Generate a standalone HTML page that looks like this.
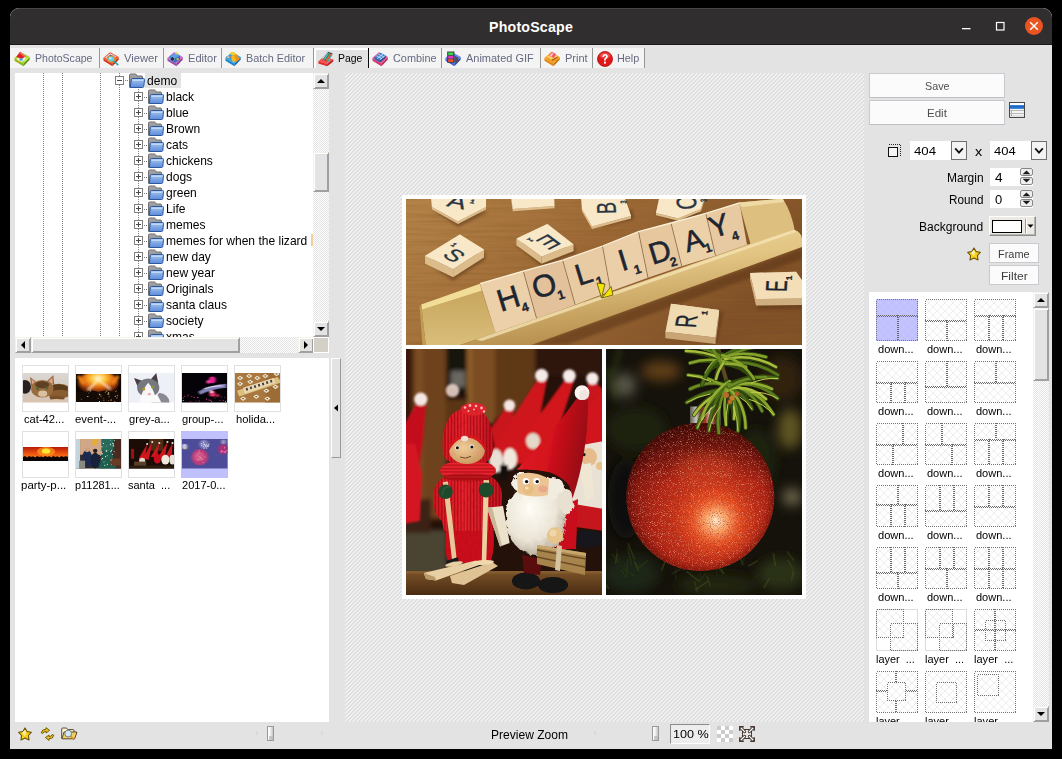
<!DOCTYPE html>
<html><head><meta charset="utf-8"><title>PhotoScape</title><style>

*{box-sizing:border-box;margin:0;padding:0}
html,body{width:1062px;height:759px;overflow:hidden;background:#000}
body{font-family:"Liberation Sans",sans-serif;font-size:12px;color:#000;position:relative}
.abs{position:absolute}
#win{position:absolute;left:10px;top:8px;width:1042px;height:741px;background:#e3e3e3;border-radius:9px 9px 0 0;overflow:hidden}
#title{position:absolute;left:0;top:0;width:1042px;height:36px;background:#302e2f;border-top:1px solid #474546;border-radius:9px 9px 0 0}
#title .tt{position:absolute;left:0;width:1042px;top:8.5px;text-align:center;color:#fff;font-weight:700;font-size:14.2px;letter-spacing:.2px;line-height:18px}
#tsep{position:absolute;left:0;top:36px;width:1042px;height:1px;background:#1b1a1a}
.hatch{background:repeating-linear-gradient(135deg,#f1f1f1 0,#f1f1f1 1.4142px,#dedede 1.4142px,#dedede 2.8284px)}
.sx{display:inline-block;white-space:pre;transform:scaleX(.857);transform-origin:0 50%;font-size:14px;line-height:16px}
.sxc{transform-origin:50% 50%}
.sxr{transform-origin:100% 50%}
.chk{background-image:conic-gradient(#fff 25%,#e3e3e3 0 50%,#fff 0 75%,#e3e3e3 0);background-size:2px 2px}
.b3{background:#e3e3e3;border:1px solid;border-color:#f4f1e6 #a0a0a0 #a0a0a0 #f4f1e6;box-shadow:inset 1px 1px 0 #fff,inset -1px -1px 0 #a0a0a0}


.tab{position:absolute;top:40px;height:20px;font-size:11px;line-height:20px;color:#777c88;white-space:pre}
.tsp{position:absolute;top:40px;width:1px;height:20px;background:#979797}
.trow{position:absolute;height:16px;line-height:16px;white-space:pre}
.btn{position:absolute;background:#fafafa;border:1px solid #cbcbd1;text-align:center;color:#555}
.lbl{position:absolute;white-space:pre}

</style></head><body><div id="win">
<div id="title"><div class="tt">PhotoScape</div><svg class="abs" style="left:930px;top:-1px" width="112" height="36" viewBox="940 8 112 36">
<rect x="962" y="28" width="8.5" height="1.3" fill="#fff"/>
<rect x="996.5" y="22.5" width="7.5" height="7.5" fill="none" stroke="#fff" stroke-width="1.2"/>
<circle cx="1034" cy="26" r="9" fill="#e95420"/>
<path d="M1030.2 22.2 L1037.8 29.8 M1037.8 22.2 L1030.2 29.8" stroke="#fff" stroke-width="1.5" fill="none"/>
</svg></div><div id="tsep"></div>
<div class="abs " style="left:0px;top:40px;width:634px;height:20px;background:#f4f4f4"></div><div class="abs " style="left:304px;top:40px;width:54px;height:20px;background:#e3e3e3;border-left:2px solid #fff;border-top:2px solid #fff;border-top-left-radius:3px"></div><div class="tsp" style="left:89px"></div><div class="tsp" style="left:153px"></div><div class="tsp" style="left:211px"></div><div class="tsp" style="left:303px"></div><div class="tsp" style="left:431px"></div><div class="tsp" style="left:530px"></div><div class="tsp" style="left:582px"></div><div class="tsp" style="left:634px"></div><div class="tsp" style="left:357.6px;width:1.4px;background:#0a0a0a"></div><div class="abs" style="left:4px;top:42.5px;width:16px;height:16px"><svg width="16" height="16" viewBox="0 0 16 16"><path d="M0.5 7.2 L9.4 12.6 L9.4 15.2 L0.5 9.8Z" fill="#86b81e"/><path d="M9.4 12.6 L15.6 6.2 L15.6 8.8 L9.4 15.2Z" fill="#5e9010"/><path d="M0.5 7.2 L7 1.6 L15.6 6.2 L9.4 12.6Z" fill="#a8d838" stroke="#a8d838" stroke-width=".8" stroke-linejoin="round"/><path d="M3 6.6 L7.4 4 L11.4 6.4 L11.4 8.6 L7.6 11 L3 8.4Z" fill="#f4f0e0"/><path d="M2.2 6 L6 .8 L11.8 5.2 L7.6 8Z" fill="#e02424"/><path d="M6 .8 L11.8 5.2 L10.6 6 L5 1.8Z" fill="#f87070"/><rect x="5.6" y="7.4" width="3" height="2.2" fill="#38a0f0"/><rect x="3.4" y="10" width="2.2" height="1.6" fill="#f0a020"/><path d="M9.6 9 L13.2 6.4 L13.8 7.2 L10.4 10.4Z" fill="#d4f060"/></svg></div><span class="abs" style="left:24.80px;top:44.47px;font-size:11.5px;line-height:13.5px;white-space:pre;color:#656a80;font-weight:400;transform:scaleX(0.9175);transform-origin:0 50%;">PhotoScape</span><div class="abs" style="left:93px;top:42.5px;width:16px;height:16px"><svg width="16" height="16" viewBox="0 0 16 16"><path d="M0.5 7.2 L9.4 12.6 L9.4 15.2 L0.5 9.8Z" fill="#d83a20"/><path d="M9.4 12.6 L15.6 6.2 L15.6 8.8 L9.4 15.2Z" fill="#b82c18"/><path d="M0.5 7.2 L7 1.6 L15.6 6.2 L9.4 12.6Z" fill="#f4603c" stroke="#f4603c" stroke-width=".8" stroke-linejoin="round"/><path d="M2.2 6.6 L7.2 2.4 L13 5.4 L8 9.8Z" fill="#f8f8f8"/><path d="M3.4 6.6 L7.3 3.4 L11.8 5.6 L8 8.8Z" fill="#2858b8"/><path d="M4.4 6.8 L7 4.6 L8.2 5.2 L5.6 7.4Z" fill="#f8f8f8" opacity=".7"/><ellipse cx="8.2" cy="8" rx="3.6" ry="3" fill="#58d0f4" stroke="#e8901c" stroke-width="1.1"/><ellipse cx="7.4" cy="7.2" rx="1.4" ry="1" fill="#c8f4ff"/><path d="M11 10.4 L14.8 13.6" stroke="#20a0a8" stroke-width="1.6" stroke-linecap="round"/></svg></div><span class="abs" style="left:113.90px;top:44.47px;font-size:11.5px;line-height:13.5px;white-space:pre;color:#656a80;font-weight:400;transform:scaleX(0.9756);transform-origin:0 50%;">Viewer</span><div class="abs" style="left:157px;top:42.5px;width:16px;height:16px"><svg width="16" height="16" viewBox="0 0 16 16"><path d="M0.5 7.2 L9.4 12.6 L9.4 15.2 L0.5 9.8Z" fill="#a848a8"/><path d="M9.4 12.6 L15.6 6.2 L15.6 8.8 L9.4 15.2Z" fill="#8a3490"/><path d="M0.5 7.2 L7 1.6 L15.6 6.2 L9.4 12.6Z" fill="#cc6ccc" stroke="#cc6ccc" stroke-width=".8" stroke-linejoin="round"/><path d="M3 5 L9 2.2 L13 4.8 L13 8.8 L7.4 11.8 L3 9Z" fill="#2c6cc4"/><path d="M3 5 L9 2.2 L13 4.8 L7.4 7.8Z" fill="#58a0e8"/><circle cx="5.4" cy="8" r="2.2" fill="#1c2c48" stroke="#9ab8e0" stroke-width=".7"/><rect x="8.4" y="1.4" width="2.6" height="2" fill="#d8e040"/><rect x="9.6" y="7" width="2" height="2.2" fill="#e8c020"/></svg></div><span class="abs" style="left:178.10px;top:44.47px;font-size:11.5px;line-height:13.5px;white-space:pre;color:#656a80;font-weight:400;transform:scaleX(0.9618);transform-origin:0 50%;">Editor</span><div class="abs" style="left:215px;top:42.5px;width:16px;height:16px"><svg width="16" height="16" viewBox="0 0 16 16"><path d="M0.5 7.2 L9.4 12.6 L9.4 15.2 L0.5 9.8Z" fill="#1c84c8"/><path d="M9.4 12.6 L15.6 6.2 L15.6 8.8 L9.4 15.2Z" fill="#1468a8"/><path d="M0.5 7.2 L7 1.6 L15.6 6.2 L9.4 12.6Z" fill="#38a8e8" stroke="#38a8e8" stroke-width=".8" stroke-linejoin="round"/><path d="M4.4 2 L8.6 .8 L12 3.2 L7.8 4.8Z" fill="#f8d020"/><path d="M7.8 4.8 L12 3.2 L14.6 8.6 L10.6 11.2Z" fill="#f09018"/><path d="M5.6 5.6 L9.4 4.4 L11 9.4 L8.2 11.8Z" fill="#f8b820"/><path d="M.8 5.6 L5.2 4.2 L7 6.4 L2.8 8Z" fill="#8a8a8a"/><rect x="2.2" y="5.4" width="2.2" height="1.3" fill="#d8d8d8"/></svg></div><span class="abs" style="left:235.80px;top:44.47px;font-size:11.5px;line-height:13.5px;white-space:pre;color:#656a80;font-weight:400;transform:scaleX(0.9448);transform-origin:0 50%;">Batch Editor</span><div class="abs" style="left:307.5px;top:42.5px;width:16px;height:16px"><svg width="16" height="16" viewBox="0 0 16 16"><path d="M0.3 10.3 L6 5.5 L15.3 8.4 L9.2 13Z" fill="#f4504c"/><path d="M0.3 10.3 L9.2 13 L9.2 15.3 L0.3 12.4Z" fill="#e02c2c"/><path d="M9.2 13 L15.3 8.4 L15.3 10.4 L9.2 15.3Z" fill="#b81c1c"/><path d="M4.1 7.6 L9.5 .5 L15.2 2.4 L9.9 11.6Z" fill="#555558"/><path d="M4.1 7.6 L9.5 .5 L10.3 .8 L4.9 8Z" fill="#f4f4f4"/><path d="M9.2 11.3 L14.5 2.2 L15.2 2.4 L9.9 11.6Z" fill="#dcdcdc"/><path d="M5.6 8 L9.9 2 L11.2 2.5 L7.1 8.9Z" fill="#30c0b8"/><path d="M7.6 9.3 L11.8 2.8 L13.2 3.3 L9.2 10.2Z" fill="#f06428"/><path d="M9.3 10.3 L13.5 3.5 L14.2 3.8 L10 10.8Z" fill="#30b0a8"/></svg></div><span class="abs" style="left:328.00px;top:44.47px;font-size:11.5px;line-height:13.5px;white-space:pre;color:#000;font-weight:400;transform:scaleX(0.9084);transform-origin:0 50%;">Page</span><div class="abs" style="left:362px;top:42.5px;width:16px;height:16px"><svg width="16" height="16" viewBox="0 0 16 16"><path d="M0.5 7.2 L9.4 12.6 L9.4 15.2 L0.5 9.8Z" fill="#d8346c"/><path d="M9.4 12.6 L15.6 6.2 L15.6 8.8 L9.4 15.2Z" fill="#b82458"/><path d="M0.5 7.2 L7 1.6 L15.6 6.2 L9.4 12.6Z" fill="#f4588c" stroke="#f4588c" stroke-width=".8" stroke-linejoin="round"/><path d="M2.4 6 L8.4 1.8 L13.8 4.6 L8 9.2Z" fill="#3c88d8"/><path d="M2.4 6 L8 9.2 L8 11.4 L2.4 8.2Z" fill="#2868b0"/><path d="M8 9.2 L13.8 4.6 L13.8 6.8 L8 11.4Z" fill="#1c5498"/><path d="M4.4 4.8 L10 7.6 M6.4 3.2 L12 6 M5.2 7.6 L11 3.2 M8 8.8 L13.2 4.6" stroke="#d8ecff" stroke-width=".7" fill="none"/></svg></div><span class="abs" style="left:382.50px;top:44.47px;font-size:11.5px;line-height:13.5px;white-space:pre;color:#656a80;font-weight:400;transform:scaleX(0.9450);transform-origin:0 50%;">Combine</span><div class="abs" style="left:435px;top:42.5px;width:16px;height:16px"><svg width="16" height="16" viewBox="0 0 16 16"><path d="M0.5 7.2 L9.4 12.6 L9.4 15.2 L0.5 9.8Z" fill="#4060d0"/><path d="M9.4 12.6 L15.6 6.2 L15.6 8.8 L9.4 15.2Z" fill="#2c48b0"/><path d="M0.5 7.2 L7 1.6 L15.6 6.2 L9.4 12.6Z" fill="#6484f0" stroke="#6484f0" stroke-width=".8" stroke-linejoin="round"/><path d="M2.2 .6 L9.4 .6 L9.4 11.8 L2.2 11.8Z" fill="#38383c"/><rect x="3.2" y="1.4" width="5.2" height="2.8" fill="#30d848"/><rect x="3.2" y="4.8" width="5.2" height="2.8" fill="#e830c8"/><rect x="3.2" y="8.2" width="5.2" height="2.8" fill="#f05028"/><path d="M9.4 4.6 L13.4 6.8 L13.4 11 L9.4 11.8Z" fill="#505058"/></svg></div><span class="abs" style="left:455.80px;top:44.47px;font-size:11.5px;line-height:13.5px;white-space:pre;color:#656a80;font-weight:400;transform:scaleX(0.9542);transform-origin:0 50%;">Animated GIF</span><div class="abs" style="left:534px;top:42.5px;width:16px;height:16px"><svg width="16" height="16" viewBox="0 0 16 16"><path d="M0.5 7.2 L9.4 12.6 L9.4 15.2 L0.5 9.8Z" fill="#e08414"/><path d="M9.4 12.6 L15.6 6.2 L15.6 8.8 L9.4 15.2Z" fill="#c06c0c"/><path d="M0.5 7.2 L7 1.6 L15.6 6.2 L9.4 12.6Z" fill="#f8a830" stroke="#f8a830" stroke-width=".8" stroke-linejoin="round"/><path d="M2.6 5.8 L8.4 2.6 L13.6 5.4 L13.6 9 L7.8 12.2 L2.6 9.4Z" fill="#f0a028"/><path d="M2.6 5.8 L8.4 2.6 L13.6 5.4 L7.8 8.6Z" fill="#fcd070"/><path d="M4.8 4.8 L7.8 .8 L12.2 3 L9.8 7Z" fill="#f05868"/><path d="M5.6 4.8 L8 1.8 L9.6 2.6 L7.4 5.8Z" fill="#fcc0c8"/><path d="M7.8 8.6 L13.6 5.4 L13.6 7 L7.8 10.2Z" fill="#b86810"/></svg></div><span class="abs" style="left:555.20px;top:44.47px;font-size:11.5px;line-height:13.5px;white-space:pre;color:#656a80;font-weight:400;transform:scaleX(0.9596);transform-origin:0 50%;">Print</span><div class="abs" style="left:587px;top:42.5px;width:16px;height:16px"><svg width="16" height="16" viewBox="0 0 16 16"><circle cx="8" cy="8" r="7.5" fill="#e01818"/><circle cx="8" cy="8" r="7.5" fill="none" stroke="#b00c0c" stroke-width=".8"/><ellipse cx="8" cy="4.6" rx="5.4" ry="3" fill="#f86868" opacity=".55"/><path d="M5.4 6 Q5.4 3 8 3 Q10.8 3 10.8 5.6 Q10.8 7.2 9.2 8 Q8.6 8.4 8.8 9.6 L7 9.6 Q6.8 7.8 8 7 Q9 6.4 9 5.6 Q9 4.6 8 4.6 Q7 4.6 7 6Z" fill="#fff"/><rect x="6.9" y="10.6" width="2" height="2" fill="#fff"/></svg></div><span class="abs" style="left:607.00px;top:44.47px;font-size:11.5px;line-height:13.5px;white-space:pre;color:#656a80;font-weight:400;transform:scaleX(0.9427);transform-origin:0 50%;">Help</span>
<div class="abs " style="left:5px;top:65px;width:298px;height:264px;background:#fff;overflow:hidden"><svg width="0" height="0" style="position:absolute"><defs><linearGradient id="fgf" x1="0" y1="0" x2="0" y2="1"><stop offset="0" stop-color="#a4c6f2"/><stop offset="1" stop-color="#5b8bd8"/></linearGradient><linearGradient id="fgb" x1="0" y1="0" x2="0" y2="1"><stop offset="0" stop-color="#a8a8a8"/><stop offset="1" stop-color="#787878"/></linearGradient></defs></svg><div class="abs" style="left:28px;top:0px;width:1px;height:264px;background:repeating-linear-gradient(180deg,#808080 0,#808080 1px,transparent 1px,transparent 2px)"></div><div class="abs" style="left:47px;top:0px;width:1px;height:264px;background:repeating-linear-gradient(180deg,#808080 0,#808080 1px,transparent 1px,transparent 2px)"></div><div class="abs" style="left:85px;top:0px;width:1px;height:264px;background:repeating-linear-gradient(180deg,#808080 0,#808080 1px,transparent 1px,transparent 2px)"></div><div class="abs" style="left:104px;top:0px;width:1px;height:4px;background:repeating-linear-gradient(180deg,#808080 0,#808080 1px,transparent 1px,transparent 2px)"></div><div class="abs" style="left:104px;top:12px;width:1px;height:252px;background:repeating-linear-gradient(180deg,#808080 0,#808080 1px,transparent 1px,transparent 2px)"></div><div class="abs" style="left:110px;top:7px;width:4px;height:1px;background:repeating-linear-gradient(90deg,#808080 0,#808080 1px,transparent 1px,transparent 2px)"></div><div class="abs" style="left:100px;top:3px;width:9px;height:9px;border:1px solid #808080;background:#fff"><div class="abs" style="left:1px;top:3px;width:5px;height:1px;background:#4a4a4a"></div></div><div class="abs" style="left:114px;top:-0.5px;width:16px;height:16px;"><svg width="16" height="16" viewBox="0 0 16 16"><path d="M0.5 14.5V2.2Q0.5 1 1.6 1H6.2Q7.2 1 7.6 2L8 3H12.6Q13.5 3 13.5 4V6" fill="url(#fgb)" stroke="#6e6e6e" stroke-width="1"/><path d="M1.2 14.5 L2.4 6.6 Q2.6 5.5 3.6 5.5 H14.6 Q15.6 5.5 15.5 6.6 L14.8 13.4 Q14.6 14.5 13.6 14.5Z" fill="url(#fgf)" stroke="#2b56a4" stroke-width="1"/><path d="M3.4 6.6H14.5L14.3 8H3.2z" fill="#c4dcf8" opacity=".85"/></svg></div><div class="abs" style="left:130px;top:0px;width:36px;height:15px;background:#e3e3e3"></div><div class="abs" style="left:-5px;top:-65px"><span class="abs" style="left:136.80px;top:65.17px;font-size:13.5px;line-height:15.5px;white-space:pre;color:#000;font-weight:400;transform:scaleX(0.8925);transform-origin:0 50%;">demo</span></div><div class="abs" style="left:123px;top:16px;width:1px;height:248px;background:repeating-linear-gradient(180deg,#808080 0,#808080 1px,transparent 1px,transparent 2px)"></div><div class="abs" style="left:129px;top:24px;width:4px;height:1px;background:repeating-linear-gradient(90deg,#808080 0,#808080 1px,transparent 1px,transparent 2px)"></div><div class="abs" style="left:119px;top:19px;width:9px;height:9px;border:1px solid #808080;background:#fff"><div class="abs" style="left:1px;top:3px;width:5px;height:1px;background:#4a4a4a"></div><div class="abs" style="left:3px;top:1px;width:1px;height:5px;background:#4a4a4a"></div></div><div class="abs" style="left:133px;top:15.5px;width:16px;height:16px;"><svg width="16" height="16" viewBox="0 0 16 16"><path d="M0.5 14.5V2.2Q0.5 1 1.6 1H6.2Q7.2 1 7.6 2L8 3H12.6Q13.5 3 13.5 4V6" fill="url(#fgb)" stroke="#6e6e6e" stroke-width="1"/><path d="M1.2 14.5 L2.4 6.6 Q2.6 5.5 3.6 5.5 H14.6 Q15.6 5.5 15.5 6.6 L14.8 13.4 Q14.6 14.5 13.6 14.5Z" fill="url(#fgf)" stroke="#2b56a4" stroke-width="1"/><path d="M3.4 6.6H14.5L14.3 8H3.2z" fill="#c4dcf8" opacity=".85"/></svg></div><div class="abs" style="left:-5px;top:-65px"><span class="abs" style="left:155.50px;top:80.97px;font-size:13.5px;line-height:15.5px;white-space:pre;color:#000;font-weight:400;transform:scaleX(0.8925);transform-origin:0 50%;">black</span></div><div class="abs" style="left:129px;top:40px;width:4px;height:1px;background:repeating-linear-gradient(90deg,#808080 0,#808080 1px,transparent 1px,transparent 2px)"></div><div class="abs" style="left:119px;top:35px;width:9px;height:9px;border:1px solid #808080;background:#fff"><div class="abs" style="left:1px;top:3px;width:5px;height:1px;background:#4a4a4a"></div><div class="abs" style="left:3px;top:1px;width:1px;height:5px;background:#4a4a4a"></div></div><div class="abs" style="left:133px;top:31.5px;width:16px;height:16px;"><svg width="16" height="16" viewBox="0 0 16 16"><path d="M0.5 14.5V2.2Q0.5 1 1.6 1H6.2Q7.2 1 7.6 2L8 3H12.6Q13.5 3 13.5 4V6" fill="url(#fgb)" stroke="#6e6e6e" stroke-width="1"/><path d="M1.2 14.5 L2.4 6.6 Q2.6 5.5 3.6 5.5 H14.6 Q15.6 5.5 15.5 6.6 L14.8 13.4 Q14.6 14.5 13.6 14.5Z" fill="url(#fgf)" stroke="#2b56a4" stroke-width="1"/><path d="M3.4 6.6H14.5L14.3 8H3.2z" fill="#c4dcf8" opacity=".85"/></svg></div><div class="abs" style="left:-5px;top:-65px"><span class="abs" style="left:155.50px;top:96.97px;font-size:13.5px;line-height:15.5px;white-space:pre;color:#000;font-weight:400;transform:scaleX(0.8925);transform-origin:0 50%;">blue</span></div><div class="abs" style="left:129px;top:56px;width:4px;height:1px;background:repeating-linear-gradient(90deg,#808080 0,#808080 1px,transparent 1px,transparent 2px)"></div><div class="abs" style="left:119px;top:51px;width:9px;height:9px;border:1px solid #808080;background:#fff"><div class="abs" style="left:1px;top:3px;width:5px;height:1px;background:#4a4a4a"></div><div class="abs" style="left:3px;top:1px;width:1px;height:5px;background:#4a4a4a"></div></div><div class="abs" style="left:133px;top:47.5px;width:16px;height:16px;"><svg width="16" height="16" viewBox="0 0 16 16"><path d="M0.5 14.5V2.2Q0.5 1 1.6 1H6.2Q7.2 1 7.6 2L8 3H12.6Q13.5 3 13.5 4V6" fill="url(#fgb)" stroke="#6e6e6e" stroke-width="1"/><path d="M1.2 14.5 L2.4 6.6 Q2.6 5.5 3.6 5.5 H14.6 Q15.6 5.5 15.5 6.6 L14.8 13.4 Q14.6 14.5 13.6 14.5Z" fill="url(#fgf)" stroke="#2b56a4" stroke-width="1"/><path d="M3.4 6.6H14.5L14.3 8H3.2z" fill="#c4dcf8" opacity=".85"/></svg></div><div class="abs" style="left:-5px;top:-65px"><span class="abs" style="left:155.50px;top:112.97px;font-size:13.5px;line-height:15.5px;white-space:pre;color:#000;font-weight:400;transform:scaleX(0.8925);transform-origin:0 50%;">Brown</span></div><div class="abs" style="left:129px;top:72px;width:4px;height:1px;background:repeating-linear-gradient(90deg,#808080 0,#808080 1px,transparent 1px,transparent 2px)"></div><div class="abs" style="left:119px;top:67px;width:9px;height:9px;border:1px solid #808080;background:#fff"><div class="abs" style="left:1px;top:3px;width:5px;height:1px;background:#4a4a4a"></div><div class="abs" style="left:3px;top:1px;width:1px;height:5px;background:#4a4a4a"></div></div><div class="abs" style="left:133px;top:63.5px;width:16px;height:16px;"><svg width="16" height="16" viewBox="0 0 16 16"><path d="M0.5 14.5V2.2Q0.5 1 1.6 1H6.2Q7.2 1 7.6 2L8 3H12.6Q13.5 3 13.5 4V6" fill="url(#fgb)" stroke="#6e6e6e" stroke-width="1"/><path d="M1.2 14.5 L2.4 6.6 Q2.6 5.5 3.6 5.5 H14.6 Q15.6 5.5 15.5 6.6 L14.8 13.4 Q14.6 14.5 13.6 14.5Z" fill="url(#fgf)" stroke="#2b56a4" stroke-width="1"/><path d="M3.4 6.6H14.5L14.3 8H3.2z" fill="#c4dcf8" opacity=".85"/></svg></div><div class="abs" style="left:-5px;top:-65px"><span class="abs" style="left:155.50px;top:128.97px;font-size:13.5px;line-height:15.5px;white-space:pre;color:#000;font-weight:400;transform:scaleX(0.8925);transform-origin:0 50%;">cats</span></div><div class="abs" style="left:129px;top:88px;width:4px;height:1px;background:repeating-linear-gradient(90deg,#808080 0,#808080 1px,transparent 1px,transparent 2px)"></div><div class="abs" style="left:119px;top:83px;width:9px;height:9px;border:1px solid #808080;background:#fff"><div class="abs" style="left:1px;top:3px;width:5px;height:1px;background:#4a4a4a"></div><div class="abs" style="left:3px;top:1px;width:1px;height:5px;background:#4a4a4a"></div></div><div class="abs" style="left:133px;top:79.5px;width:16px;height:16px;"><svg width="16" height="16" viewBox="0 0 16 16"><path d="M0.5 14.5V2.2Q0.5 1 1.6 1H6.2Q7.2 1 7.6 2L8 3H12.6Q13.5 3 13.5 4V6" fill="url(#fgb)" stroke="#6e6e6e" stroke-width="1"/><path d="M1.2 14.5 L2.4 6.6 Q2.6 5.5 3.6 5.5 H14.6 Q15.6 5.5 15.5 6.6 L14.8 13.4 Q14.6 14.5 13.6 14.5Z" fill="url(#fgf)" stroke="#2b56a4" stroke-width="1"/><path d="M3.4 6.6H14.5L14.3 8H3.2z" fill="#c4dcf8" opacity=".85"/></svg></div><div class="abs" style="left:-5px;top:-65px"><span class="abs" style="left:155.50px;top:144.97px;font-size:13.5px;line-height:15.5px;white-space:pre;color:#000;font-weight:400;transform:scaleX(0.8925);transform-origin:0 50%;">chickens</span></div><div class="abs" style="left:129px;top:104px;width:4px;height:1px;background:repeating-linear-gradient(90deg,#808080 0,#808080 1px,transparent 1px,transparent 2px)"></div><div class="abs" style="left:119px;top:99px;width:9px;height:9px;border:1px solid #808080;background:#fff"><div class="abs" style="left:1px;top:3px;width:5px;height:1px;background:#4a4a4a"></div><div class="abs" style="left:3px;top:1px;width:1px;height:5px;background:#4a4a4a"></div></div><div class="abs" style="left:133px;top:95.5px;width:16px;height:16px;"><svg width="16" height="16" viewBox="0 0 16 16"><path d="M0.5 14.5V2.2Q0.5 1 1.6 1H6.2Q7.2 1 7.6 2L8 3H12.6Q13.5 3 13.5 4V6" fill="url(#fgb)" stroke="#6e6e6e" stroke-width="1"/><path d="M1.2 14.5 L2.4 6.6 Q2.6 5.5 3.6 5.5 H14.6 Q15.6 5.5 15.5 6.6 L14.8 13.4 Q14.6 14.5 13.6 14.5Z" fill="url(#fgf)" stroke="#2b56a4" stroke-width="1"/><path d="M3.4 6.6H14.5L14.3 8H3.2z" fill="#c4dcf8" opacity=".85"/></svg></div><div class="abs" style="left:-5px;top:-65px"><span class="abs" style="left:155.50px;top:160.97px;font-size:13.5px;line-height:15.5px;white-space:pre;color:#000;font-weight:400;transform:scaleX(0.8925);transform-origin:0 50%;">dogs</span></div><div class="abs" style="left:129px;top:120px;width:4px;height:1px;background:repeating-linear-gradient(90deg,#808080 0,#808080 1px,transparent 1px,transparent 2px)"></div><div class="abs" style="left:119px;top:115px;width:9px;height:9px;border:1px solid #808080;background:#fff"><div class="abs" style="left:1px;top:3px;width:5px;height:1px;background:#4a4a4a"></div><div class="abs" style="left:3px;top:1px;width:1px;height:5px;background:#4a4a4a"></div></div><div class="abs" style="left:133px;top:111.5px;width:16px;height:16px;"><svg width="16" height="16" viewBox="0 0 16 16"><path d="M0.5 14.5V2.2Q0.5 1 1.6 1H6.2Q7.2 1 7.6 2L8 3H12.6Q13.5 3 13.5 4V6" fill="url(#fgb)" stroke="#6e6e6e" stroke-width="1"/><path d="M1.2 14.5 L2.4 6.6 Q2.6 5.5 3.6 5.5 H14.6 Q15.6 5.5 15.5 6.6 L14.8 13.4 Q14.6 14.5 13.6 14.5Z" fill="url(#fgf)" stroke="#2b56a4" stroke-width="1"/><path d="M3.4 6.6H14.5L14.3 8H3.2z" fill="#c4dcf8" opacity=".85"/></svg></div><div class="abs" style="left:-5px;top:-65px"><span class="abs" style="left:155.50px;top:176.97px;font-size:13.5px;line-height:15.5px;white-space:pre;color:#000;font-weight:400;transform:scaleX(0.8925);transform-origin:0 50%;">green</span></div><div class="abs" style="left:129px;top:136px;width:4px;height:1px;background:repeating-linear-gradient(90deg,#808080 0,#808080 1px,transparent 1px,transparent 2px)"></div><div class="abs" style="left:119px;top:131px;width:9px;height:9px;border:1px solid #808080;background:#fff"><div class="abs" style="left:1px;top:3px;width:5px;height:1px;background:#4a4a4a"></div><div class="abs" style="left:3px;top:1px;width:1px;height:5px;background:#4a4a4a"></div></div><div class="abs" style="left:133px;top:127.5px;width:16px;height:16px;"><svg width="16" height="16" viewBox="0 0 16 16"><path d="M0.5 14.5V2.2Q0.5 1 1.6 1H6.2Q7.2 1 7.6 2L8 3H12.6Q13.5 3 13.5 4V6" fill="url(#fgb)" stroke="#6e6e6e" stroke-width="1"/><path d="M1.2 14.5 L2.4 6.6 Q2.6 5.5 3.6 5.5 H14.6 Q15.6 5.5 15.5 6.6 L14.8 13.4 Q14.6 14.5 13.6 14.5Z" fill="url(#fgf)" stroke="#2b56a4" stroke-width="1"/><path d="M3.4 6.6H14.5L14.3 8H3.2z" fill="#c4dcf8" opacity=".85"/></svg></div><div class="abs" style="left:-5px;top:-65px"><span class="abs" style="left:155.50px;top:192.97px;font-size:13.5px;line-height:15.5px;white-space:pre;color:#000;font-weight:400;transform:scaleX(0.8925);transform-origin:0 50%;">Life</span></div><div class="abs" style="left:129px;top:152px;width:4px;height:1px;background:repeating-linear-gradient(90deg,#808080 0,#808080 1px,transparent 1px,transparent 2px)"></div><div class="abs" style="left:119px;top:147px;width:9px;height:9px;border:1px solid #808080;background:#fff"><div class="abs" style="left:1px;top:3px;width:5px;height:1px;background:#4a4a4a"></div><div class="abs" style="left:3px;top:1px;width:1px;height:5px;background:#4a4a4a"></div></div><div class="abs" style="left:133px;top:143.5px;width:16px;height:16px;"><svg width="16" height="16" viewBox="0 0 16 16"><path d="M0.5 14.5V2.2Q0.5 1 1.6 1H6.2Q7.2 1 7.6 2L8 3H12.6Q13.5 3 13.5 4V6" fill="url(#fgb)" stroke="#6e6e6e" stroke-width="1"/><path d="M1.2 14.5 L2.4 6.6 Q2.6 5.5 3.6 5.5 H14.6 Q15.6 5.5 15.5 6.6 L14.8 13.4 Q14.6 14.5 13.6 14.5Z" fill="url(#fgf)" stroke="#2b56a4" stroke-width="1"/><path d="M3.4 6.6H14.5L14.3 8H3.2z" fill="#c4dcf8" opacity=".85"/></svg></div><div class="abs" style="left:-5px;top:-65px"><span class="abs" style="left:155.50px;top:208.97px;font-size:13.5px;line-height:15.5px;white-space:pre;color:#000;font-weight:400;transform:scaleX(0.8925);transform-origin:0 50%;">memes</span></div><div class="abs" style="left:129px;top:168px;width:4px;height:1px;background:repeating-linear-gradient(90deg,#808080 0,#808080 1px,transparent 1px,transparent 2px)"></div><div class="abs" style="left:119px;top:163px;width:9px;height:9px;border:1px solid #808080;background:#fff"><div class="abs" style="left:1px;top:3px;width:5px;height:1px;background:#4a4a4a"></div><div class="abs" style="left:3px;top:1px;width:1px;height:5px;background:#4a4a4a"></div></div><div class="abs" style="left:133px;top:159.5px;width:16px;height:16px;"><svg width="16" height="16" viewBox="0 0 16 16"><path d="M0.5 14.5V2.2Q0.5 1 1.6 1H6.2Q7.2 1 7.6 2L8 3H12.6Q13.5 3 13.5 4V6" fill="url(#fgb)" stroke="#6e6e6e" stroke-width="1"/><path d="M1.2 14.5 L2.4 6.6 Q2.6 5.5 3.6 5.5 H14.6 Q15.6 5.5 15.5 6.6 L14.8 13.4 Q14.6 14.5 13.6 14.5Z" fill="url(#fgf)" stroke="#2b56a4" stroke-width="1"/><path d="M3.4 6.6H14.5L14.3 8H3.2z" fill="#c4dcf8" opacity=".85"/></svg></div><div class="abs" style="left:-5px;top:-65px"><span class="abs" style="left:155.50px;top:224.97px;font-size:13.5px;line-height:15.5px;white-space:pre;color:#000;font-weight:400;transform:scaleX(0.8925);transform-origin:0 50%;">memes for when the lizard</span></div><div class="abs" style="left:129px;top:184px;width:4px;height:1px;background:repeating-linear-gradient(90deg,#808080 0,#808080 1px,transparent 1px,transparent 2px)"></div><div class="abs" style="left:119px;top:179px;width:9px;height:9px;border:1px solid #808080;background:#fff"><div class="abs" style="left:1px;top:3px;width:5px;height:1px;background:#4a4a4a"></div><div class="abs" style="left:3px;top:1px;width:1px;height:5px;background:#4a4a4a"></div></div><div class="abs" style="left:133px;top:175.5px;width:16px;height:16px;"><svg width="16" height="16" viewBox="0 0 16 16"><path d="M0.5 14.5V2.2Q0.5 1 1.6 1H6.2Q7.2 1 7.6 2L8 3H12.6Q13.5 3 13.5 4V6" fill="url(#fgb)" stroke="#6e6e6e" stroke-width="1"/><path d="M1.2 14.5 L2.4 6.6 Q2.6 5.5 3.6 5.5 H14.6 Q15.6 5.5 15.5 6.6 L14.8 13.4 Q14.6 14.5 13.6 14.5Z" fill="url(#fgf)" stroke="#2b56a4" stroke-width="1"/><path d="M3.4 6.6H14.5L14.3 8H3.2z" fill="#c4dcf8" opacity=".85"/></svg></div><div class="abs" style="left:-5px;top:-65px"><span class="abs" style="left:155.50px;top:240.97px;font-size:13.5px;line-height:15.5px;white-space:pre;color:#000;font-weight:400;transform:scaleX(0.8925);transform-origin:0 50%;">new day</span></div><div class="abs" style="left:129px;top:200px;width:4px;height:1px;background:repeating-linear-gradient(90deg,#808080 0,#808080 1px,transparent 1px,transparent 2px)"></div><div class="abs" style="left:119px;top:195px;width:9px;height:9px;border:1px solid #808080;background:#fff"><div class="abs" style="left:1px;top:3px;width:5px;height:1px;background:#4a4a4a"></div><div class="abs" style="left:3px;top:1px;width:1px;height:5px;background:#4a4a4a"></div></div><div class="abs" style="left:133px;top:191.5px;width:16px;height:16px;"><svg width="16" height="16" viewBox="0 0 16 16"><path d="M0.5 14.5V2.2Q0.5 1 1.6 1H6.2Q7.2 1 7.6 2L8 3H12.6Q13.5 3 13.5 4V6" fill="url(#fgb)" stroke="#6e6e6e" stroke-width="1"/><path d="M1.2 14.5 L2.4 6.6 Q2.6 5.5 3.6 5.5 H14.6 Q15.6 5.5 15.5 6.6 L14.8 13.4 Q14.6 14.5 13.6 14.5Z" fill="url(#fgf)" stroke="#2b56a4" stroke-width="1"/><path d="M3.4 6.6H14.5L14.3 8H3.2z" fill="#c4dcf8" opacity=".85"/></svg></div><div class="abs" style="left:-5px;top:-65px"><span class="abs" style="left:155.50px;top:256.97px;font-size:13.5px;line-height:15.5px;white-space:pre;color:#000;font-weight:400;transform:scaleX(0.8925);transform-origin:0 50%;">new year</span></div><div class="abs" style="left:129px;top:216px;width:4px;height:1px;background:repeating-linear-gradient(90deg,#808080 0,#808080 1px,transparent 1px,transparent 2px)"></div><div class="abs" style="left:119px;top:211px;width:9px;height:9px;border:1px solid #808080;background:#fff"><div class="abs" style="left:1px;top:3px;width:5px;height:1px;background:#4a4a4a"></div><div class="abs" style="left:3px;top:1px;width:1px;height:5px;background:#4a4a4a"></div></div><div class="abs" style="left:133px;top:207.5px;width:16px;height:16px;"><svg width="16" height="16" viewBox="0 0 16 16"><path d="M0.5 14.5V2.2Q0.5 1 1.6 1H6.2Q7.2 1 7.6 2L8 3H12.6Q13.5 3 13.5 4V6" fill="url(#fgb)" stroke="#6e6e6e" stroke-width="1"/><path d="M1.2 14.5 L2.4 6.6 Q2.6 5.5 3.6 5.5 H14.6 Q15.6 5.5 15.5 6.6 L14.8 13.4 Q14.6 14.5 13.6 14.5Z" fill="url(#fgf)" stroke="#2b56a4" stroke-width="1"/><path d="M3.4 6.6H14.5L14.3 8H3.2z" fill="#c4dcf8" opacity=".85"/></svg></div><div class="abs" style="left:-5px;top:-65px"><span class="abs" style="left:155.50px;top:272.97px;font-size:13.5px;line-height:15.5px;white-space:pre;color:#000;font-weight:400;transform:scaleX(0.8925);transform-origin:0 50%;">Originals</span></div><div class="abs" style="left:129px;top:232px;width:4px;height:1px;background:repeating-linear-gradient(90deg,#808080 0,#808080 1px,transparent 1px,transparent 2px)"></div><div class="abs" style="left:119px;top:227px;width:9px;height:9px;border:1px solid #808080;background:#fff"><div class="abs" style="left:1px;top:3px;width:5px;height:1px;background:#4a4a4a"></div><div class="abs" style="left:3px;top:1px;width:1px;height:5px;background:#4a4a4a"></div></div><div class="abs" style="left:133px;top:223.5px;width:16px;height:16px;"><svg width="16" height="16" viewBox="0 0 16 16"><path d="M0.5 14.5V2.2Q0.5 1 1.6 1H6.2Q7.2 1 7.6 2L8 3H12.6Q13.5 3 13.5 4V6" fill="url(#fgb)" stroke="#6e6e6e" stroke-width="1"/><path d="M1.2 14.5 L2.4 6.6 Q2.6 5.5 3.6 5.5 H14.6 Q15.6 5.5 15.5 6.6 L14.8 13.4 Q14.6 14.5 13.6 14.5Z" fill="url(#fgf)" stroke="#2b56a4" stroke-width="1"/><path d="M3.4 6.6H14.5L14.3 8H3.2z" fill="#c4dcf8" opacity=".85"/></svg></div><div class="abs" style="left:-5px;top:-65px"><span class="abs" style="left:155.50px;top:288.97px;font-size:13.5px;line-height:15.5px;white-space:pre;color:#000;font-weight:400;transform:scaleX(0.8925);transform-origin:0 50%;">santa claus</span></div><div class="abs" style="left:129px;top:248px;width:4px;height:1px;background:repeating-linear-gradient(90deg,#808080 0,#808080 1px,transparent 1px,transparent 2px)"></div><div class="abs" style="left:119px;top:243px;width:9px;height:9px;border:1px solid #808080;background:#fff"><div class="abs" style="left:1px;top:3px;width:5px;height:1px;background:#4a4a4a"></div><div class="abs" style="left:3px;top:1px;width:1px;height:5px;background:#4a4a4a"></div></div><div class="abs" style="left:133px;top:239.5px;width:16px;height:16px;"><svg width="16" height="16" viewBox="0 0 16 16"><path d="M0.5 14.5V2.2Q0.5 1 1.6 1H6.2Q7.2 1 7.6 2L8 3H12.6Q13.5 3 13.5 4V6" fill="url(#fgb)" stroke="#6e6e6e" stroke-width="1"/><path d="M1.2 14.5 L2.4 6.6 Q2.6 5.5 3.6 5.5 H14.6 Q15.6 5.5 15.5 6.6 L14.8 13.4 Q14.6 14.5 13.6 14.5Z" fill="url(#fgf)" stroke="#2b56a4" stroke-width="1"/><path d="M3.4 6.6H14.5L14.3 8H3.2z" fill="#c4dcf8" opacity=".85"/></svg></div><div class="abs" style="left:-5px;top:-65px"><span class="abs" style="left:155.50px;top:304.97px;font-size:13.5px;line-height:15.5px;white-space:pre;color:#000;font-weight:400;transform:scaleX(0.8925);transform-origin:0 50%;">society</span></div><div class="abs" style="left:129px;top:264px;width:4px;height:1px;background:repeating-linear-gradient(90deg,#808080 0,#808080 1px,transparent 1px,transparent 2px)"></div><div class="abs" style="left:119px;top:259px;width:9px;height:9px;border:1px solid #808080;background:#fff"><div class="abs" style="left:1px;top:3px;width:5px;height:1px;background:#4a4a4a"></div><div class="abs" style="left:3px;top:1px;width:1px;height:5px;background:#4a4a4a"></div></div><div class="abs" style="left:133px;top:255.5px;width:16px;height:16px;"><svg width="16" height="16" viewBox="0 0 16 16"><path d="M0.5 14.5V2.2Q0.5 1 1.6 1H6.2Q7.2 1 7.6 2L8 3H12.6Q13.5 3 13.5 4V6" fill="url(#fgb)" stroke="#6e6e6e" stroke-width="1"/><path d="M1.2 14.5 L2.4 6.6 Q2.6 5.5 3.6 5.5 H14.6 Q15.6 5.5 15.5 6.6 L14.8 13.4 Q14.6 14.5 13.6 14.5Z" fill="url(#fgf)" stroke="#2b56a4" stroke-width="1"/><path d="M3.4 6.6H14.5L14.3 8H3.2z" fill="#c4dcf8" opacity=".85"/></svg></div><div class="abs" style="left:-5px;top:-65px"><span class="abs" style="left:155.50px;top:320.97px;font-size:13.5px;line-height:15.5px;white-space:pre;color:#000;font-weight:400;transform:scaleX(0.8925);transform-origin:0 50%;">xmas</span></div><div class="abs" style="left:296px;top:161px;width:2px;height:12px;background:#f6cf9c"></div></div><div class="abs chk" style="left:303px;top:65px;width:16px;height:264px;"></div><div class="abs b3" style="left:303px;top:65px;width:16px;height:16px;"><svg class="abs" style="left:0;top:0" width="16" height="16"><polygon points="3,9 11,9 7,5" fill="#000"/></svg></div><div class="abs b3" style="left:303px;top:313px;width:16px;height:16px;"><svg class="abs" style="left:0;top:0" width="16" height="16"><polygon points="3,5 11,5 7,9" fill="#000"/></svg></div><div class="abs b3" style="left:303px;top:144px;width:16px;height:40px;"></div><div class="abs chk" style="left:5px;top:329px;width:298px;height:16px;"></div><div class="abs b3" style="left:5px;top:329px;width:16px;height:16px;"><svg class="abs" style="left:0;top:0" width="16" height="16"><polygon points="9,3 9,11 5,7" fill="#000"/></svg></div><div class="abs b3" style="left:288px;top:329px;width:16px;height:16px;"><svg class="abs" style="left:0;top:0" width="16" height="16"><polygon points="5,3 5,11 9,7" fill="#000"/></svg></div><div class="abs b3" style="left:21px;top:329px;width:209px;height:16px;"></div><div class="abs " style="left:303px;top:329px;width:16px;height:16px;background:#d4d0c8;border:1px solid #fff"></div>
<div class="abs " style="left:5px;top:350px;width:314px;height:364px;background:#fff"></div><div class="abs " style="left:321px;top:350px;width:10px;height:100px;background:#e3e3e3;border:1px solid;border-color:#fff #999 #999 #fff"><svg class="abs" style="left:0;top:44px" width="8" height="10"><polygon points="6,1.5 6,8.5 2,5" fill="#000"/></svg></div><div class="abs " style="left:12px;top:357px;width:47px;height:47px;background:#fff;border:1px solid #e0e0e0"><svg class="abs" style="left:-0.5px;top:7px" width="45.5" height="29.5" viewBox="0 0 45 30" preserveAspectRatio="none"><defs><filter id="t1b"><feGaussianBlur stdDeviation=".7"/></filter><linearGradient id="t1g" x1="0" y1="0" x2="0" y2="1"><stop offset="0" stop-color="#dcd8d4"/><stop offset=".6" stop-color="#d2c8be"/><stop offset="1" stop-color="#d8c4b0"/></linearGradient></defs><rect width="45" height="30" fill="url(#t1g)"/><g filter="url(#t1b)"><ellipse cx="2" cy="14" rx="6" ry="7" fill="#2a2420"/><path d="M24 14 Q36 8 46 14 L46 24 Q36 27 26 24Z" fill="#8a5c30"/><path d="M30 12 Q38 10 44 14 L44 18 Q36 16 30 18Z" fill="#5a3a1c"/><polygon points="7,4 13,9 8,14" fill="#a06a44"/><polygon points="30,2 31,12 23,9" fill="#a06a44"/><polygon points="8.5,6 12,9.5 9,12" fill="#d8a890"/><polygon points="29,4.5 29.5,11 25,9" fill="#d8a890"/><ellipse cx="19" cy="16" rx="11" ry="9" fill="#9a6c3c"/><ellipse cx="19" cy="12" rx="7" ry="3.5" fill="#5e4022"/><ellipse cx="19.5" cy="21" rx="4.5" ry="3.2" fill="#d8c0a0"/><circle cx="14.5" cy="16" r="1.5" fill="#4a6a3a"/><circle cx="23.5" cy="15.5" r="1.5" fill="#4a6a3a"/><path d="M26 24 Q34 22 42 25 L40 27 Q32 26 27 27Z" fill="#7a5028"/></g></svg></div><span class="abs" style="left:13.50px;top:405.49px;font-size:11px;line-height:13px;white-space:pre;color:#000;font-weight:400;transform:scaleX(1.0138);transform-origin:0 50%;">cat-42...</span><div class="abs " style="left:65px;top:357px;width:47px;height:47px;background:#fff;border:1px solid #e0e0e0"><svg class="abs" style="left:-0.5px;top:8px" width="45.5" height="28" viewBox="0 0 45 28" preserveAspectRatio="none"><defs><filter id="t2b"><feGaussianBlur stdDeviation="1.2"/></filter><radialGradient id="t2g" cx=".5" cy=".3" r=".6"><stop offset="0" stop-color="#fffbe0"/><stop offset=".32" stop-color="#ffc030"/><stop offset=".65" stop-color="#e06410"/><stop offset="1" stop-color="#5a1c04"/></radialGradient></defs><rect width="45" height="28" fill="#0c0604"/><g filter="url(#t2b)"><ellipse cx="22" cy="9" rx="20" ry="12" fill="url(#t2g)"/><path d="M2 2 L8 10 M42 2 L36 10" stroke="#f08418" stroke-width="3"/><path d="M22 6 L12 16 M22 6 L34 15" stroke="#fff4c0" stroke-width="1.2"/></g><path d="M0 19 Q6 16 10 18 Q16 15 22 18 Q30 15 36 18 Q40 16 45 19 L45 28 L0 28Z" fill="#140a06"/><rect x="11.2" y="22.0" width="1" height="1" fill="#f8e0a0"/><rect x="40.4" y="21.2" width="1" height="1" fill="#e8b060"/><rect x="27.0" y="26.0" width="1" height="1" fill="#8a5a30"/><rect x="12.2" y="18.6" width="1" height="1" fill="#8a5a30"/><rect x="24.3" y="22.0" width="1" height="1" fill="#8a5a30"/><rect x="28.5" y="17.7" width="1" height="1" fill="#c87830"/><rect x="38.3" y="21.8" width="1" height="1" fill="#e8b060"/><rect x="29.9" y="16.7" width="1" height="1" fill="#e8b060"/><rect x="14.0" y="16.3" width="1" height="1" fill="#f8e0a0"/><rect x="21.3" y="23.9" width="1" height="1" fill="#8a5a30"/><rect x="31.7" y="26.1" width="1" height="1" fill="#8a5a30"/><rect x="32.3" y="22.3" width="1" height="1" fill="#c87830"/><rect x="38.8" y="17.1" width="1" height="1" fill="#c87830"/><rect x="22.3" y="18.8" width="1" height="1" fill="#8a5a30"/><rect x="34.5" y="25.4" width="1" height="1" fill="#8a5a30"/><rect x="22.8" y="20.2" width="1" height="1" fill="#f8e0a0"/><rect x="24.0" y="20.5" width="1" height="1" fill="#c87830"/><rect x="39.9" y="23.5" width="1" height="1" fill="#e8b060"/><rect x="37.8" y="26.9" width="1" height="1" fill="#c87830"/><rect x="31.0" y="19.6" width="1" height="1" fill="#e8b060"/><rect x="31.7" y="18.3" width="1" height="1" fill="#f8e0a0"/><rect x="13.3" y="16.7" width="1" height="1" fill="#8a5a30"/><rect x="4.8" y="24.8" width="1" height="1" fill="#8a5a30"/><rect x="39.6" y="16.2" width="1" height="1" fill="#8a5a30"/><rect x="34.1" y="25.6" width="1" height="1" fill="#e8b060"/><rect x="27.0" y="24.4" width="1" height="1" fill="#8a5a30"/><rect x="31.9" y="19.6" width="1" height="1" fill="#f8e0a0"/><rect x="22.7" y="27.0" width="1" height="1" fill="#f8e0a0"/></svg></div><span class="abs" style="left:65.30px;top:405.49px;font-size:11px;line-height:13px;white-space:pre;color:#000;font-weight:400;transform:scaleX(1.0365);transform-origin:0 50%;">event-...</span><div class="abs " style="left:118px;top:357px;width:47px;height:47px;background:#fff;border:1px solid #e0e0e0"><svg class="abs" style="left:-0.5px;top:7px" width="45.5" height="29.5" viewBox="0 0 45 30" preserveAspectRatio="none"><defs><filter id="t3b"><feGaussianBlur stdDeviation=".6"/></filter></defs><rect width="45" height="30" fill="#eef0f8"/><g filter="url(#t3b)"><path d="M30 20 Q40 22 40 30 L22 30Z" fill="#8a8a92"/><polygon points="5,5 13,8 9,15" fill="#4a3c42"/><polygon points="27,0 29,11 21,7" fill="#4a3c42"/><ellipse cx="19" cy="15" rx="11" ry="9.5" fill="#77777f"/><path d="M19 10 Q24 16 26 24 Q20 30 12 24 Q14 16 19 10Z" fill="#f6f6f8"/><path d="M12 22 Q20 26 28 22 L32 30 L10 30Z" fill="#fafafa"/><circle cx="14.5" cy="16.5" r="1.5" fill="#b89020"/><circle cx="23.5" cy="14.5" r="1.5" fill="#8a9a30"/><ellipse cx="20" cy="21.5" rx="1.6" ry="1.1" fill="#f0a0a8"/></g></svg></div><span class="abs" style="left:118.70px;top:405.49px;font-size:11px;line-height:13px;white-space:pre;color:#000;font-weight:400;transform:scaleX(1.0109);transform-origin:0 50%;">grey-a...</span><div class="abs " style="left:171px;top:357px;width:47px;height:47px;background:#fff;border:1px solid #e0e0e0"><svg class="abs" style="left:-0.5px;top:7px" width="45.5" height="29.5" viewBox="0 0 45 30" preserveAspectRatio="none"><defs><filter id="t4b"><feGaussianBlur stdDeviation=".8"/></filter></defs><rect width="45" height="30" fill="#050308"/><g filter="url(#t4b)"><path d="M16 19 Q28 12 44 11 L44 15 Q30 16 18 22Z" fill="#9a9ad8" opacity=".85"/><path d="M22 16 Q30 13 40 13" stroke="#e8e8ff" stroke-width="1.2" fill="none"/><circle cx="30" cy="7" r="3.5" fill="#e0208a"/><circle cx="26" cy="9" r="2" fill="#f040a0"/><circle cx="30" cy="21" r="3" fill="#e83070"/><circle cx="29" cy="19" r="1.6" fill="#ffd0e0"/><circle cx="35" cy="23" r="1.8" fill="#d02040"/></g><rect x="27.4" y="27.2" width="1" height="1" fill="#e84090"/><rect x="37.0" y="27.4" width="1" height="1" fill="#c03070"/><rect x="28.6" y="28.3" width="1" height="1" fill="#e84090"/><rect x="16.4" y="28.1" width="1" height="1" fill="#7a2050"/><rect x="23.9" y="26.0" width="1" height="1" fill="#e84090"/><rect x="32.2" y="24.9" width="1" height="1" fill="#c03070"/><rect x="40.3" y="27.4" width="1" height="1" fill="#c03070"/><rect x="33.5" y="22.5" width="1" height="1" fill="#7a2050"/><rect x="5.6" y="22.0" width="1" height="1" fill="#e84090"/><rect x="9.2" y="23.5" width="1" height="1" fill="#c03070"/><rect x="38.4" y="24.0" width="1" height="1" fill="#c03070"/><rect x="23.7" y="26.7" width="1" height="1" fill="#c03070"/><rect x="8.0" y="28.8" width="1" height="1" fill="#c03070"/><rect x="42.5" y="28.3" width="1" height="1" fill="#f890c0"/><rect x="0.9" y="24.9" width="1" height="1" fill="#c03070"/><rect x="11.6" y="24.3" width="1" height="1" fill="#e84090"/><rect x="26.2" y="27.0" width="1" height="1" fill="#e84090"/><rect x="13.6" y="27.7" width="1" height="1" fill="#7a2050"/><rect x="30.6" y="23.3" width="1" height="1" fill="#7a2050"/><rect x="31.0" y="22.4" width="1" height="1" fill="#e84090"/><rect x="41.8" y="24.5" width="1" height="1" fill="#7a2050"/><rect x="0.8" y="27.5" width="1" height="1" fill="#f890c0"/><rect x="16.6" y="27.9" width="1" height="1" fill="#7a2050"/><rect x="2.1" y="23.3" width="1" height="1" fill="#c03070"/><rect x="5.2" y="23.7" width="1" height="1" fill="#7a2050"/><rect x="15.2" y="24.5" width="1" height="1" fill="#f890c0"/></svg></div><span class="abs" style="left:171.50px;top:405.49px;font-size:11px;line-height:13px;white-space:pre;color:#000;font-weight:400;transform:scaleX(1.0130);transform-origin:0 50%;">group-...</span><div class="abs " style="left:224px;top:357px;width:47px;height:47px;background:#fff;border:1px solid #e0e0e0"><svg class="abs" style="left:-0.5px;top:7px" width="45.5" height="29.5" viewBox="0 0 45 30" preserveAspectRatio="none"><defs><filter id="t5b"><feGaussianBlur stdDeviation=".35"/></filter></defs><rect width="45" height="30" fill="#a87840"/><rect x="30" width="15" height="30" fill="#946430" opacity=".6"/><g filter="url(#t5b)"><polygon points="2,5 5,2.8 8.2,5 5,7.4" fill="#f4e6c4"/><rect x="4.2" y="4.4" width="1.6" height="1.2" fill="#5a5a5a"/><polygon points="11,3 14,0.7999999999999998 17.2,3 14,5.4" fill="#f4e6c4"/><rect x="13.2" y="2.4" width="1.6" height="1.2" fill="#5a5a5a"/><polygon points="19,5 22,2.8 25.2,5 22,7.4" fill="#f4e6c4"/><rect x="21.2" y="4.4" width="1.6" height="1.2" fill="#5a5a5a"/><polygon points="27,3 30,0.7999999999999998 33.2,3 30,5.4" fill="#f4e6c4"/><rect x="29.2" y="2.4" width="1.6" height="1.2" fill="#5a5a5a"/><polygon points="38,1 41,-1.2000000000000002 44.2,1 41,3.4" fill="#f4e6c4"/><rect x="40.2" y="0.4" width="1.6" height="1.2" fill="#5a5a5a"/><polygon points="2,11 5,8.8 8.2,11 5,13.4" fill="#f4e6c4"/><rect x="4.2" y="10.4" width="1.6" height="1.2" fill="#5a5a5a"/><polygon points="12,9 15,6.8 18.2,9 15,11.4" fill="#f4e6c4"/><rect x="14.2" y="8.4" width="1.6" height="1.2" fill="#5a5a5a"/><polygon points="37,14 40,11.8 43.2,14 40,16.4" fill="#f4e6c4"/><rect x="39.2" y="13.4" width="1.6" height="1.2" fill="#5a5a5a"/><polygon points="28,18 31,15.8 34.2,18 31,20.4" fill="#f4e6c4"/><rect x="30.2" y="17.4" width="1.6" height="1.2" fill="#5a5a5a"/><polygon points="18,24 21,21.8 24.2,24 21,26.4" fill="#f4e6c4"/><rect x="20.2" y="23.4" width="1.6" height="1.2" fill="#5a5a5a"/><polygon points="29,26 32,23.8 35.2,26 32,28.4" fill="#f4e6c4"/><rect x="31.2" y="25.4" width="1.6" height="1.2" fill="#5a5a5a"/><polygon points="5,26 8,23.8 11.2,26 8,28.4" fill="#f4e6c4"/><rect x="7.2" y="25.4" width="1.6" height="1.2" fill="#5a5a5a"/><polygon points="2,18 42,4 45,8 45,10 4,24" fill="#dcc080"/><polygon points="8,15 38,5 40,10 10,21" fill="#ecd8b0"/><rect x="11" y="15.5" width="1.8" height="2.6" fill="#3a3a40" transform="rotate(-18 11 17.0)"/><rect x="15" y="14.1" width="1.8" height="2.6" fill="#3a3a40" transform="rotate(-18 15 15.6)"/><rect x="19" y="12.8" width="1.8" height="2.6" fill="#3a3a40" transform="rotate(-18 19 14.3)"/><rect x="23" y="11.4" width="1.8" height="2.6" fill="#3a3a40" transform="rotate(-18 23 12.9)"/><rect x="27" y="10.1" width="1.8" height="2.6" fill="#3a3a40" transform="rotate(-18 27 11.6)"/><rect x="31" y="8.7" width="1.8" height="2.6" fill="#3a3a40" transform="rotate(-18 31 10.2)"/><rect x="35" y="7.3" width="1.8" height="2.6" fill="#3a3a40" transform="rotate(-18 35 8.8)"/></g></svg></div><span class="abs" style="left:225.80px;top:405.49px;font-size:11px;line-height:13px;white-space:pre;color:#000;font-weight:400;transform:scaleX(1.0174);transform-origin:0 50%;">holida...</span><div class="abs " style="left:12px;top:423px;width:47px;height:47px;background:#fff;border:1px solid #e0e0e0"><svg class="abs" style="left:-0.5px;top:15px" width="45.5" height="14" viewBox="0 0 45 14" preserveAspectRatio="none"><defs><linearGradient id="t6g" x1="0" y1="0" x2="0" y2="1"><stop offset="0" stop-color="#b81808"/><stop offset=".5" stop-color="#f05a10"/><stop offset="1" stop-color="#f89020"/></linearGradient><filter id="t6b"><feGaussianBlur stdDeviation=".6"/></filter></defs><rect width="45" height="14" fill="url(#t6g)"/><g filter="url(#t6b)"><ellipse cx="22.8" cy="4.5" rx="9" ry="4.5" fill="#ff9a18" opacity=".7"/><ellipse cx="22.8" cy="4" rx="4.2" ry="2.6" fill="#ffe830"/></g><path d="M0 10 L2 9 L4 10.5 L6 9 L8 10 L10 9.2 L12 10.4 L14 9 L16 10 L18 9.4 L20 10.2 L22 9 L24 10 L26 9.3 L28 10.4 L30 9 L32 10 L34 9.2 L36 10.4 L38 9 L40 10 L42 9.2 L45 10 L45 14 L0 14Z" fill="#0a0404"/></svg></div><span class="abs" style="left:11.20px;top:471.49px;font-size:11px;line-height:13px;white-space:pre;color:#000;font-weight:400;transform:scaleX(1.0436);transform-origin:0 50%;">party-p...</span><div class="abs " style="left:65px;top:423px;width:47px;height:47px;background:#fff;border:1px solid #e0e0e0"><svg class="abs" style="left:-0.5px;top:7px" width="45.5" height="29.5" viewBox="0 0 45 30" preserveAspectRatio="none"><defs><filter id="t7b"><feGaussianBlur stdDeviation=".7"/></filter></defs><rect width="45" height="30" fill="#3a2a22"/><g filter="url(#t7b)"><rect x="0" y="0" width="4" height="30" fill="#c4d4dc"/><rect x="4" y="0" width="22" height="16" fill="#d0a888"/><polygon points="17,0 21,0 20,7 16,5" fill="#e8b020"/><rect x="38" y="0" width="7" height="30" fill="#4a2c20"/><polygon points="31,-2 40,30 22,30" fill="#1f5e50"/><rect x="25" y="0" width="12" height="12" fill="#2a6a5a"/><ellipse cx="11" cy="20" rx="5" ry="9" fill="#1c2c50"/><ellipse cx="19" cy="22" rx="4.5" ry="8" fill="#16203a"/><circle cx="11" cy="11" r="2.4" fill="#c8a080"/><circle cx="19" cy="12" r="2.2" fill="#2a1c18"/><rect x="3" y="22" width="6" height="8" fill="#8a8a80"/><rect x="34" y="20" width="10" height="7" fill="#6a3a28"/></g><rect x="29.9" y="11.1" width="1" height="1" fill="#a0d8c8"/><rect x="25.8" y="19.3" width="1" height="1" fill="#ffffff"/><rect x="30.5" y="25.3" width="1" height="1" fill="#e8f4f0"/><rect x="28.0" y="26.3" width="1" height="1" fill="#e8f4f0"/><rect x="33.9" y="5.6" width="1" height="1" fill="#5aa890"/><rect x="37.3" y="12.4" width="1" height="1" fill="#a0d8c8"/><rect x="26.6" y="4.0" width="1" height="1" fill="#e8f4f0"/><rect x="34.6" y="11.4" width="1" height="1" fill="#e8f4f0"/><rect x="36.8" y="6.5" width="1" height="1" fill="#a0d8c8"/><rect x="33.9" y="12.4" width="1" height="1" fill="#e8f4f0"/><rect x="34.6" y="25.6" width="1" height="1" fill="#5aa890"/><rect x="27.2" y="22.9" width="1" height="1" fill="#a0d8c8"/><rect x="33.6" y="1.1" width="1" height="1" fill="#5aa890"/><rect x="23.8" y="11.2" width="1" height="1" fill="#5aa890"/><rect x="25.1" y="7.4" width="1" height="1" fill="#e8f4f0"/><rect x="37.5" y="1.1" width="1" height="1" fill="#a0d8c8"/><rect x="36.4" y="6.5" width="1" height="1" fill="#e8f4f0"/><rect x="36.4" y="4.6" width="1" height="1" fill="#e8f4f0"/><rect x="30.5" y="16.5" width="1" height="1" fill="#a0d8c8"/><rect x="29.3" y="11.7" width="1" height="1" fill="#e8f4f0"/><rect x="33.5" y="4.9" width="1" height="1" fill="#e8f4f0"/><rect x="23.8" y="16.0" width="1" height="1" fill="#a0d8c8"/><rect x="34.2" y="20.9" width="1" height="1" fill="#e8f4f0"/><rect x="24.8" y="20.0" width="1" height="1" fill="#a0d8c8"/><rect x="25.4" y="14.6" width="1" height="1" fill="#ffffff"/><rect x="35.7" y="15.1" width="1" height="1" fill="#e8f4f0"/><rect x="36.0" y="4.0" width="1" height="1" fill="#ffffff"/><rect x="29.8" y="11.9" width="1" height="1" fill="#e8f4f0"/><rect x="28.7" y="17.4" width="1" height="1" fill="#e8f4f0"/><rect x="29.5" y="6.8" width="1" height="1" fill="#5aa890"/></svg></div><span class="abs" style="left:65.30px;top:471.49px;font-size:11px;line-height:13px;white-space:pre;color:#000;font-weight:400;transform:scaleX(0.9942);transform-origin:0 50%;">p11281...</span><div class="abs " style="left:118px;top:423px;width:47px;height:47px;background:#fff;border:1px solid #e0e0e0"><svg class="abs" style="left:-0.5px;top:7px" width="45.5" height="29.5" viewBox="0 0 45 30" preserveAspectRatio="none"><defs><filter id="t8b"><feGaussianBlur stdDeviation=".6"/></filter></defs><rect width="45" height="30" fill="#1c0c06"/><rect x="20" width="14" height="12" fill="#5a3418" opacity=".8"/><g filter="url(#t8b)"><polygon points="18,5 9.5,20 15.5,21" fill="#d0141c"/><circle cx="18" cy="5" r="1" fill="#f4e8e4"/><polygon points="23,3 13.5,20 19.5,21" fill="#d0141c"/><circle cx="23" cy="3" r="1" fill="#f4e8e4"/><polygon points="30,4 21.5,18 27.5,19" fill="#d0141c"/><circle cx="30" cy="4" r="1" fill="#f4e8e4"/><polygon points="38,3 28.0,20 35.0,21" fill="#d0141c"/><circle cx="38" cy="3" r="1" fill="#f4e8e4"/><polygon points="43,4 35.0,20 42.0,21" fill="#d0141c"/><circle cx="43" cy="4" r="1" fill="#f4e8e4"/><rect x="2" y="10" width="3" height="10" fill="#a00c14"/><ellipse cx="28" cy="20" rx="3.5" ry="5" fill="#c8101a"/><ellipse cx="36" cy="21" rx="4" ry="5" fill="#f0e8dc"/><ellipse cx="43" cy="21" rx="3" ry="5" fill="#e8e0d4"/><ellipse cx="13" cy="22" rx="3" ry="3" fill="#e0d8cc"/><rect x="5" y="23" width="12" height="6" fill="#5a4028"/><rect x="0" y="27" width="45" height="3" fill="#2a1a10"/></g></svg></div><span class="abs" style="left:118.00px;top:471.49px;font-size:11px;line-height:13px;white-space:pre;color:#000;font-weight:400;transform:scaleX(0.9999);transform-origin:0 50%;">santa  ...</span><div class="abs " style="left:171px;top:423px;width:47px;height:47px;background:#c0c0fd;border:1px solid #c0c0fd"><svg class="abs" style="left:0px;top:7px" width="45.5" height="29.5" viewBox="0 0 45 30" preserveAspectRatio="none"><defs><filter id="t9b"><feGaussianBlur stdDeviation=".8"/></filter></defs><rect width="45" height="30" fill="#4c4c98"/><g filter="url(#t9b)"><circle cx="17.7" cy="18.5" r="8.3" fill="#b83c7c"/><circle cx="17" cy="18" r="5" fill="#d05888"/><circle cx="40.7" cy="10.5" r="5.3" fill="#a83078"/><circle cx="21.8" cy="5.3" r="4.6" fill="#8c8cc4" opacity=".8"/><circle cx="2.5" cy="7.5" r="2.6" fill="#c8c8e8"/><circle cx="3" cy="9.5" r="1.2" fill="#e8d890"/><circle cx="41" cy="3" r="2.4" fill="#b0a8c8" opacity=".8"/></g><rect x="18.9" y="5.8" width="1" height="1" fill="#e4e4f4"/><rect x="21.5" y="4.7" width="1" height="1" fill="#e4e4f4"/><rect x="23.5" y="5.4" width="1" height="1" fill="#e4e4f4"/><rect x="21.3" y="8.9" width="1" height="1" fill="#e4e4f4"/><rect x="20.8" y="2.8" width="1" height="1" fill="#e4e4f4"/><rect x="19.0" y="4.2" width="1" height="1" fill="#e4e4f4"/><rect x="23.0" y="6.9" width="1" height="1" fill="#e4e4f4"/><rect x="23.9" y="8.8" width="1" height="1" fill="#e4e4f4"/><rect x="25.2" y="6.6" width="1" height="1" fill="#e4e4f4"/><rect x="24.6" y="6.7" width="1" height="1" fill="#e4e4f4"/><rect x="20.9" y="6.9" width="1" height="1" fill="#e4e4f4"/><rect x="21.8" y="5.2" width="1" height="1" fill="#e4e4f4"/><rect x="25.6" y="6.8" width="1" height="1" fill="#e4e4f4"/><rect x="21.4" y="5.3" width="1" height="1" fill="#e4e4f4"/><rect x="26.0" y="4.9" width="1" height="1" fill="#e4e4f4"/><rect x="23.2" y="6.5" width="1" height="1" fill="#e4e4f4"/><rect x="19.1" y="20.1" width="1" height="1" fill="#e890b0"/><rect x="16.9" y="17.7" width="1" height="1" fill="#e890b0"/><rect x="17.6" y="18.2" width="1" height="1" fill="#e890b0"/><rect x="20.4" y="23.5" width="1" height="1" fill="#e890b0"/><rect x="15.3" y="20.2" width="1" height="1" fill="#e890b0"/><rect x="14.9" y="16.6" width="1" height="1" fill="#e890b0"/><rect x="17.5" y="18.6" width="1" height="1" fill="#e890b0"/><rect x="16.7" y="11.8" width="1" height="1" fill="#e890b0"/><rect x="22.3" y="17.8" width="1" height="1" fill="#e890b0"/><rect x="16.1" y="20.5" width="1" height="1" fill="#e890b0"/><rect x="16.0" y="14.1" width="1" height="1" fill="#e890b0"/><rect x="18.9" y="19.6" width="1" height="1" fill="#e890b0"/><rect x="39.2" y="12.2" width="1" height="1" fill="#e8a0d0"/><rect x="41.5" y="8.4" width="1" height="1" fill="#e8a0d0"/><rect x="44.3" y="11.2" width="1" height="1" fill="#e8a0d0"/><rect x="38.6" y="11.5" width="1" height="1" fill="#e8a0d0"/><rect x="41.0" y="12.4" width="1" height="1" fill="#e8a0d0"/><rect x="38.1" y="12.7" width="1" height="1" fill="#e8a0d0"/><rect x="42.7" y="12.0" width="1" height="1" fill="#e8a0d0"/><rect x="42.1" y="13.3" width="1" height="1" fill="#e8a0d0"/></svg></div><span class="abs" style="left:171.80px;top:471.49px;font-size:11px;line-height:13px;white-space:pre;color:#000;font-weight:400;transform:scaleX(1.0018);transform-origin:0 50%;">2017-0...</span>
<div class="abs hatch" style="left:335px;top:65px;width:519px;height:649px;"></div><div class="abs " style="left:392px;top:187px;width:404px;height:404px;background:#fff"></div><div class="abs " style="left:396px;top:191px;width:396px;height:146px;background:#a5763f;overflow:hidden"><svg class="abs" style="left:0;top:0" width="396" height="146" viewBox="0 0 396 146" font-family="Liberation Sans, sans-serif"><defs>
<linearGradient id="tw" x1="0" y1="0" x2="1" y2=".35"><stop offset="0" stop-color="#b4834a"/><stop offset=".45" stop-color="#a06c38"/><stop offset="1" stop-color="#7f4f27"/></linearGradient>
<linearGradient id="lip" x1="0" y1="0" x2=".33" y2="1"><stop offset="0" stop-color="#f0dba4"/><stop offset=".45" stop-color="#e2c482"/><stop offset="1" stop-color="#b48c4a"/></linearGradient>
<linearGradient id="rk" x1="0" y1="0" x2="0" y2="1"><stop offset="0" stop-color="#c8a75e"/><stop offset="1" stop-color="#d9bd7a"/></linearGradient>
<filter id="grain" x="0" y="0" width="100%" height="100%"><feTurbulence type="fractalNoise" baseFrequency="0.012 0.35" numOctaves="2" seed="3"/><feColorMatrix values="0 0 0 0 0.25  0 0 0 0 0.12  0 0 0 0 0.02  0 0 0 -1.6 0.95"/></filter>
<filter id="b1"><feGaussianBlur stdDeviation="1.6"/></filter>
<filter id="b05"><feGaussianBlur stdDeviation=".5"/></filter>
</defs><rect width="396" height="146" fill="url(#tw)"/><rect width="396" height="146" filter="url(#grain)" opacity=".55"/><g filter="url(#b1)" opacity=".55"><polygon points="19.0,62.0 47.0,82.0 80.0,60.0 78.0,52.0" fill="#5a3614" /><polygon points="110.0,46.0 136.0,68.0 170.0,54.0 168.0,46.0" fill="#5a3614" /><polygon points="26.0,10.0 52.0,28.0 82.0,13.0" fill="#5a3614" /><polygon points="250.0,14.0 272.0,25.0 298.0,13.0" fill="#5a3614" /><polygon points="196.0,28.0 228.0,20.0 226.0,10.0" fill="#5a3614" /><polygon points="258.0,134.0 310.0,146.0 318.0,112.0" fill="#5a3614" /><polygon points="350.0,102.0 352.0,110.0 396.0,110.0 396.0,100.0" fill="#5a3614" /><polygon points="125.0,146.0 396.0,50.0 396.0,60.0 160.0,146.0" fill="#5a3614" /></g><polygon points="25.0,-2.0 80.0,-1.0 80.0,1.6 25.0,0.6" fill="#efd8aa" /><polygon points="80.0,-1.0 80.0,8.0 80.0,10.6 80.0,1.6" fill="#dcbc8a" /><polygon points="80.0,8.0 52.0,22.5 52.0,25.1 80.0,10.6" fill="#dcbc8a" /><polygon points="52.0,22.5 26.0,8.0 26.0,10.6 52.0,25.1" fill="#dcbc8a" /><polygon points="26.0,8.0 25.0,-2.0 25.0,0.6 26.0,10.6" fill="#dcbc8a" /><polygon points="25.0,-2.0 80.0,-1.0 80.0,8.0 52.0,22.5 26.0,8.0" fill="#f8e8c8" /><polygon points="105.0,-3.0 148.0,-3.0 148.0,-0.8 105.0,-0.8" fill="#dcbc8a" /><polygon points="148.0,-3.0 148.5,7.0 148.5,9.2 148.0,-0.8" fill="#efd8aa" /><polygon points="148.5,7.0 106.7,10.0 106.7,12.2 148.5,9.2" fill="#dcbc8a" /><polygon points="106.7,10.0 105.0,-3.0 105.0,-0.8 106.7,12.2" fill="#dcbc8a" /><polygon points="105.0,-3.0 148.0,-3.0 148.5,7.0 106.7,10.0" fill="#f8e8c8" /><polygon points="175.0,-2.0 218.0,-3.0 218.0,-0.4 175.0,0.6" fill="#dcbc8a" /><polygon points="218.0,-3.0 225.0,17.0 225.0,19.6 218.0,-0.4" fill="#efd8aa" /><polygon points="225.0,17.0 186.0,27.5 186.0,30.1 225.0,19.6" fill="#dcbc8a" /><polygon points="186.0,27.5 176.0,10.0 176.0,12.6 186.0,30.1" fill="#dcbc8a" /><polygon points="176.0,10.0 175.0,-2.0 175.0,0.6 176.0,12.6" fill="#dcbc8a" /><polygon points="175.0,-2.0 218.0,-3.0 225.0,17.0 186.0,27.5 176.0,10.0" fill="#f8e8c8" /><polygon points="253.7,-3.0 299.0,-3.0 299.0,-0.8 253.7,-0.8" fill="#dcbc8a" /><polygon points="299.0,-3.0 295.0,10.0 295.0,12.2 299.0,-0.8" fill="#dcbc8a" /><polygon points="295.0,10.0 272.0,19.5 272.0,21.7 295.0,12.2" fill="#dcbc8a" /><polygon points="272.0,19.5 250.0,14.0 250.0,16.2 272.0,21.7" fill="#dcbc8a" /><polygon points="250.0,14.0 253.7,-3.0 253.7,-0.8 250.0,16.2" fill="#dcbc8a" /><polygon points="253.7,-3.0 299.0,-3.0 295.0,10.0 272.0,19.5 250.0,14.0" fill="#f8e8c8" /><polygon points="19.2,56.7 53.8,35.6 53.8,43.6 19.2,64.7" fill="#dcbc8a" /><polygon points="53.8,35.6 77.9,50.4 77.9,58.4 53.8,43.6" fill="#efd8aa" /><polygon points="77.9,50.4 47.1,70.2 47.1,78.2 77.9,58.4" fill="#dcbc8a" /><polygon points="47.1,70.2 19.2,56.7 19.2,64.7 47.1,78.2" fill="#dcbc8a" /><polygon points="19.2,56.7 53.8,35.6 77.9,50.4 47.1,70.2" fill="#f8e8c8" /><polygon points="110.6,39.4 141.3,25.0 141.3,32.0 110.6,46.4" fill="#dcbc8a" /><polygon points="141.3,25.0 167.3,45.2 167.3,52.2 141.3,32.0" fill="#efd8aa" /><polygon points="167.3,45.2 135.6,57.7 135.6,64.7 167.3,52.2" fill="#dcbc8a" /><polygon points="135.6,57.7 110.6,39.4 110.6,46.4 135.6,64.7" fill="#dcbc8a" /><polygon points="110.6,39.4 141.3,25.0 167.3,45.2 135.6,57.7" fill="#f8e8c8" /><polygon points="265.0,104.8 313.0,111.0 313.0,117.5 265.0,111.3" fill="#efd8aa" /><polygon points="313.0,111.0 309.5,138.5 309.5,145.0 313.0,117.5" fill="#c9a575" /><polygon points="309.5,138.5 259.5,132.7 259.5,139.2 309.5,145.0" fill="#c9a575" /><polygon points="259.5,132.7 265.0,104.8 265.0,111.3 259.5,139.2" fill="#c9a575" /><polygon points="265.0,104.8 313.0,111.0 309.5,138.5 259.5,132.7" fill="#f0dab2" /><polygon points="344.0,74.0 390.0,72.7 390.0,79.2 344.0,80.5" fill="#cfae80" /><polygon points="390.0,72.7 398.0,84.6 398.0,91.1 390.0,79.2" fill="#efd8aa" /><polygon points="398.0,84.6 398.0,99.5 398.0,106.0 398.0,91.1" fill="#cfae80" /><polygon points="398.0,99.5 350.0,100.0 350.0,106.5 398.0,106.0" fill="#cfae80" /><polygon points="350.0,100.0 344.0,74.0 344.0,80.5 350.0,106.5" fill="#cfae80" /><polygon points="344.0,74.0 390.0,72.7 398.0,84.6 398.0,99.5 350.0,100.0" fill="#f3deb8" /><text stroke="#2a3542" stroke-width=".35" transform="translate(51.5,2.0) scale(1,0.7) rotate(16)" font-size="28" text-anchor="middle" dy=".36em" fill="#2a3542" font-weight="400">A</text><text stroke="#2a3542" stroke-width=".35" transform="translate(66.5,2.5) scale(1,0.62) rotate(16)" font-size="9" text-anchor="middle" dy=".36em" fill="#2a3542" font-weight="700">1</text><text stroke="#2a3542" stroke-width=".35" transform="translate(48.5,56.2) scale(1,0.62) rotate(45)" font-size="27" text-anchor="middle" dy=".36em" fill="#2a3542" font-weight="400">S</text><text stroke="#2a3542" stroke-width=".35" transform="translate(48.0,45.6) scale(1,0.62) rotate(45)" font-size="9" text-anchor="middle" dy=".36em" fill="#2a3542" font-weight="700">1</text><text stroke="#2a3542" stroke-width=".35" transform="translate(143.0,43.0) scale(1,0.62) rotate(140)" font-size="29" text-anchor="middle" dy=".36em" fill="#2a3542" font-weight="400">E</text><text stroke="#2a3542" stroke-width=".35" transform="translate(124.5,41.0) scale(1,0.62) rotate(140)" font-size="9" text-anchor="middle" dy=".36em" fill="#2a3542" font-weight="700">1</text><text stroke="#2a3542" stroke-width=".35" transform="translate(200.0,9.0) scale(1,0.66) rotate(-92)" font-size="27" text-anchor="middle" dy=".36em" fill="#2a3542" font-weight="400">B</text><text stroke="#2a3542" stroke-width=".35" transform="translate(217.5,3.0) scale(1,0.62) rotate(-92)" font-size="9" text-anchor="middle" dy=".36em" fill="#2a3542" font-weight="700">3</text><text stroke="#2a3542" stroke-width=".35" transform="translate(280.0,4.0) scale(1,0.66) rotate(-95)" font-size="28" text-anchor="middle" dy=".36em" fill="#2a3542" font-weight="400">C</text><text stroke="#2a3542" stroke-width=".35" transform="translate(297.5,1.5) scale(1,0.62) rotate(-95)" font-size="9" text-anchor="middle" dy=".36em" fill="#2a3542" font-weight="700">3</text><text stroke="#1f2630" stroke-width=".35" transform="translate(280.0,122.0) scale(1,0.6) rotate(-84)" font-size="30" text-anchor="middle" dy=".36em" fill="#1f2630" font-weight="400">R</text><text stroke="#1f2630" stroke-width=".35" transform="translate(370.0,87.0) scale(1,0.58) rotate(-88)" font-size="30" text-anchor="middle" dy=".36em" fill="#1f2630" font-weight="400">E</text><text stroke="#1f2630" stroke-width=".35" transform="translate(383.0,79.0) rotate(-88) skewX(0)" font-size="8" text-anchor="middle" dy=".36em" fill="#1f2630" font-weight="700">1</text><text stroke="#1f2630" stroke-width=".35" transform="translate(298.5,114.0) rotate(-82) skewX(0)" font-size="8" text-anchor="middle" dy=".36em" fill="#1f2630" font-weight="700">1</text><polygon points="15.8,110.8 75.8,91.7 89.4,133.7 54.0,146.0 19.8,146.0" fill="url(#rk)" /><polygon points="15.2,105.5 74.0,84.8 75.8,91.7 15.8,110.8" fill="#f1dc98" /><polygon points="15.2,105.5 15.8,110.8 19.8,146.0 16.5,146.0 13.6,108.0" fill="#c19d52" /><path d="M333 3.5 L372 0 L377 0 Q386 14 389 33 L345 47 Z" fill="#ddc080"/><path d="M333 3.5 L372 0 L377 0 L378 3 L336 8 Z" fill="#efdaa6"/><polygon points="74.0,84.6 117.3,72.1 130.8,120.2 89.4,133.7" fill="#ecd0a9" /><polygon points="117.3,72.1 156.7,61.2 169.2,105.8 130.8,120.2" fill="#e2c19b" /><polygon points="156.7,61.2 196.5,47.0 204.7,92.3 169.2,105.8" fill="#e9cba3" /><polygon points="196.5,47.0 232.5,32.7 242.0,78.8 204.7,92.3" fill="#ebcfa8" /><polygon points="232.5,32.7 265.0,24.0 275.8,67.3 242.0,78.8" fill="#e6c79e" /><polygon points="265.0,24.0 299.8,14.4 309.5,56.7 275.8,67.3" fill="#ecd0a8" /><polygon points="299.8,14.4 333.5,3.8 341.0,45.8 309.5,56.7" fill="#e8caa2" /><line x1="117.3" y1="72.1" x2="130.8" y2="120.2" stroke="#7a5a38" stroke-width=".8" opacity=".8"/><line x1="156.7" y1="61.2" x2="169.2" y2="105.8" stroke="#7a5a38" stroke-width=".8" opacity=".8"/><line x1="196.5" y1="47" x2="204.7" y2="92.3" stroke="#7a5a38" stroke-width=".8" opacity=".8"/><line x1="232.5" y1="32.7" x2="242" y2="78.8" stroke="#7a5a38" stroke-width=".8" opacity=".8"/><line x1="265" y1="24" x2="275.8" y2="67.3" stroke="#7a5a38" stroke-width=".8" opacity=".8"/><line x1="299.8" y1="14.4" x2="309.5" y2="56.7" stroke="#7a5a38" stroke-width=".8" opacity=".8"/><polyline points="74,84.6 117.3,72.1 156.7,61.2 196.5,47 232.5,32.7 265,24 299.8,14.4 333.5,3.8" fill="none" stroke="#fbf0d8" stroke-width="1.3"/><text stroke="#1d2531" stroke-width=".55" transform="translate(102.2,98.8) rotate(-18) skewX(-1)" font-size="31" text-anchor="middle" dy=".36em" fill="#1d2531" font-weight="400">H</text><text stroke="#1d2531" stroke-width=".35" transform="translate(119.0,108.2) rotate(-18) skewX(-1)" font-size="12.5" text-anchor="middle" dy=".36em" fill="#1d2531" font-weight="700">4</text><text stroke="#1d2531" stroke-width=".55" transform="translate(138.0,86.0) rotate(-18) skewX(-1)" font-size="31" text-anchor="middle" dy=".36em" fill="#1d2531" font-weight="400">O</text><text stroke="#1d2531" stroke-width=".35" transform="translate(155.0,95.7) rotate(-18) skewX(-1)" font-size="12.5" text-anchor="middle" dy=".36em" fill="#1d2531" font-weight="700">1</text><text stroke="#1d2531" stroke-width=".55" transform="translate(177.4,74.0) rotate(-18) skewX(-1)" font-size="30" text-anchor="middle" dy=".36em" fill="#1d2531" font-weight="400">L</text><text stroke="#1d2531" stroke-width=".35" transform="translate(193.6,81.8) rotate(-18) skewX(-1)" font-size="12.5" text-anchor="middle" dy=".36em" fill="#1d2531" font-weight="700">1</text><text stroke="#1d2531" stroke-width=".55" transform="translate(216.7,60.6) rotate(-18) skewX(-1)" font-size="30" text-anchor="middle" dy=".36em" fill="#1d2531" font-weight="400">I</text><text stroke="#1d2531" stroke-width=".35" transform="translate(231.6,70.2) rotate(-18) skewX(-1)" font-size="12.5" text-anchor="middle" dy=".36em" fill="#1d2531" font-weight="700">1</text><text stroke="#1d2531" stroke-width=".55" transform="translate(253.7,52.4) rotate(-18) skewX(-1)" font-size="30" text-anchor="middle" dy=".36em" fill="#1d2531" font-weight="400">D</text><text stroke="#1d2531" stroke-width=".35" transform="translate(267.6,62.5) rotate(-18) skewX(-1)" font-size="12.5" text-anchor="middle" dy=".36em" fill="#1d2531" font-weight="700">2</text><text stroke="#1d2531" stroke-width=".55" transform="translate(287.4,40.4) rotate(-18) skewX(-1)" font-size="29" text-anchor="middle" dy=".36em" fill="#1d2531" font-weight="400">A</text><text stroke="#1d2531" stroke-width=".35" transform="translate(302.3,48.6) rotate(-18) skewX(-1)" font-size="12.5" text-anchor="middle" dy=".36em" fill="#1d2531" font-weight="700">1</text><text stroke="#1d2531" stroke-width=".55" transform="translate(312.8,26.0) rotate(-18) skewX(-1)" font-size="30" text-anchor="middle" dy=".36em" fill="#1d2531" font-weight="400">Y</text><text stroke="#1d2531" stroke-width=".35" transform="translate(329.2,36.5) rotate(-18) skewX(-1)" font-size="12.5" text-anchor="middle" dy=".36em" fill="#1d2531" font-weight="700">4</text><path d="M54 146 L89.4 133.7 L341.2 45.8 L388 30.8 Q397 33 396 44 L396 48 L125 146 Z" fill="url(#lip)"/><path d="M70 140.5 L388 30.8 L390.5 32.8 L76 142 Z" fill="#f5e6b8" opacity=".75"/><polygon points="191,84 199,85 195.5,99" fill="#f4e400" stroke="#5a5200" stroke-width=".8"/><polygon points="196,99 205,87.5 207,96" fill="#f4e400" stroke="#5a5200" stroke-width=".8"/></svg></div><div class="abs " style="left:396px;top:341px;width:196px;height:246px;background:#3a1a10;overflow:hidden"><svg class="abs" style="left:0;top:0" width="196" height="246" viewBox="0 0 196 246"><defs>
<filter id="g2" x="-20%" y="-20%" width="140%" height="140%"><feGaussianBlur stdDeviation="2.2"/></filter>
<filter id="g1" x="-20%" y="-20%" width="140%" height="140%"><feGaussianBlur stdDeviation="1.1"/></filter>
<filter id="g05" x="-20%" y="-20%" width="140%" height="140%"><feGaussianBlur stdDeviation=".6"/></filter>
<filter id="g4" x="-30%" y="-30%" width="160%" height="160%"><feGaussianBlur stdDeviation="4"/></filter>
<filter id="knit" x="0" y="0" width="100%" height="100%"><feTurbulence type="fractalNoise" baseFrequency=".5 .25" numOctaves="1" seed="5"/><feColorMatrix values="0 0 0 0 .35  0 0 0 0 0  0 0 0 0 0  0 0 0 -2.2 1.1"/><feComposite in2="SourceGraphic" operator="in"/></filter>
<filter id="fluff" x="-10%" y="-10%" width="120%" height="120%"><feTurbulence type="fractalNoise" baseFrequency=".18" numOctaves="2" seed="8" result="n"/><feDisplacementMap in="SourceGraphic" in2="n" scale="7"/><feGaussianBlur stdDeviation=".5"/></filter>
<linearGradient id="hat" x1="0" y1="0" x2="1" y2=".25"><stop offset="0" stop-color="#e2202a"/><stop offset=".55" stop-color="#d4121c"/><stop offset="1" stop-color="#9a0a12"/></linearGradient>
<linearGradient id="bhat" x1="0" y1="0" x2="0" y2="1"><stop offset="0" stop-color="#d81a22"/><stop offset="1" stop-color="#a80c14"/></linearGradient>
<radialGradient id="beard" cx=".4" cy=".35" r=".75"><stop offset="0" stop-color="#fffdf6"/><stop offset=".6" stop-color="#ebe4d6"/><stop offset="1" stop-color="#a89c88"/></radialGradient>
<radialGradient id="face" cx=".4" cy=".4" r=".7"><stop offset="0" stop-color="#f0cc98"/><stop offset="1" stop-color="#c8925a"/></radialGradient>
<linearGradient id="shelf" x1="0" y1="0" x2="0" y2="1"><stop offset="0" stop-color="#7a5228"/><stop offset="1" stop-color="#4a2c12"/></linearGradient>
<linearGradient id="knitg" x1="0" y1="0" x2="1" y2="0"><stop offset="0" stop-color="#c8101a"/><stop offset=".45" stop-color="#e01c26"/><stop offset="1" stop-color="#b00c16"/></linearGradient>
<pattern id="rib" width="3.2" height="3" patternUnits="userSpaceOnUse"><rect width="1.1" height="3" fill="#8e0810" opacity=".55"/><rect x="1.6" width="1" height="3" fill="#ff5058" opacity=".28"/></pattern>
<pattern id="ribh" width="3" height="3.4" patternUnits="userSpaceOnUse"><rect width="3" height="1.2" fill="#8e0810" opacity=".5"/><rect y="1.8" width="3" height="1" fill="#ff5058" opacity=".25"/></pattern>
</defs><rect width="196" height="246" fill="#24120a"/><g filter="url(#g2)"><rect x="-5" y="-5" width="14" height="120" fill="#3a1810"/><rect x="7" y="-5" width="34" height="175" fill="#6e421c"/><rect x="9" y="-5" width="8" height="175" fill="#7c4e22"/><rect x="40" y="-5" width="21" height="50" fill="#191410"/><rect x="45" y="22" width="14" height="16" fill="#6a6660"/><rect x="61" y="-5" width="28" height="80" fill="#7c4e22"/><rect x="61" y="-5" width="5" height="80" fill="#90602c"/><rect x="89" y="-5" width="42" height="75" fill="#5e3818"/><rect x="129" y="-5" width="72" height="32" fill="#2e180c"/><rect x="40" y="50" width="22" height="60" fill="#5a3418"/><rect x="-5" y="181" width="46" height="48" fill="#4a4433"/><rect x="-5" y="150" width="30" height="34" fill="#3a2414"/></g><rect x="0" y="222" width="196" height="24" fill="url(#shelf)"/><rect x="0" y="222" width="196" height="2.5" fill="#8a6234" opacity=".7" filter="url(#g05)"/><g filter="url(#g1)"><path d="M10 55 L20 55 L17 92 L12 123 L14 170 L-3 175 L-3 78 Z" fill="#c4101a"/><path d="M-3 95 L9 95 L16 125 L14 172 L-3 175Z" fill="#d41820"/><circle cx="14.8" cy="50.2" r="6.6" fill="#f4e8e4"/><circle cx="46.5" cy="41.5" r="6.8" fill="#e8d0c8" opacity=".9"/><path d="M99 60 L108 60 L104 96 L92 112 L84 80 Z" fill="#c8121c"/><circle cx="103.4" cy="56.3" r="5.8" fill="#f4e6e2"/><path d="M131 31 L141 31 L131 84 L110 118 L84 104 Z" fill="#cf141e"/><circle cx="135.6" cy="26.4" r="6.6" fill="#f6ebe8"/><path d="M158 32 L168 32 L154 76 L128 118 L100 112 Z" fill="#d2151f"/><circle cx="163.3" cy="26.8" r="6.6" fill="#f6ebe8"/><path d="M182 34 L191 34 L198 42 L198 100 L172 90 Z" fill="#c8121c"/><circle cx="186.4" cy="29.5" r="6.2" fill="#f6ebe8"/><ellipse cx="90" cy="112" rx="7" ry="12" fill="#e8e0d4"/><ellipse cx="104" cy="110" rx="7" ry="11" fill="#f0e8dc"/><ellipse cx="127" cy="92" rx="7" ry="8" fill="#e4d8c8"/><rect x="94" y="116" width="8" height="14" fill="#17110f"/></g><g filter="url(#g05)"><path d="M183 58 L198 40 L198 100 L176 100 Z" fill="#d0141e"/><path d="M176 96 L198 92 L198 175 L170 175 L166 150Z" fill="#e9e2d4"/><ellipse cx="183" cy="108" rx="8" ry="9" fill="#e6bc8c"/><circle cx="178" cy="105.6" r="1.6" fill="#111"/><path d="M173 116 L185 114 L188 148 L180 152 Z" fill="#efe6d4"/><circle cx="194" cy="117" r="4" fill="#e4c08c"/><path d="M168 155 L198 160 L198 182 L170 178Z" fill="#c4121c"/><ellipse cx="182" cy="190" rx="16" ry="9" fill="#16161a"/></g><g filter="url(#g05)"><path d="M40 178 Q38 212 44 214 L84 214 Q90 200 87 176 Z" fill="#c8101a"/><path d="M27.5 150 Q26 134 40 127 L84 127 Q97 134 96 150 Q96 166 88 172 L88 182 L38 182 L36 172 Q27 166 27.5 150Z" fill="url(#knitg)"/><path d="M27.5 150 Q26 134 40 127 L84 127 Q97 134 96 150 Q96 166 88 172 L88 182 L38 182 L36 172 Q27 166 27.5 150Z" fill="url(#rib)"/><ellipse cx="62" cy="121.5" rx="28" ry="10.5" fill="#e01c26"/><ellipse cx="62" cy="121.5" rx="28" ry="10.5" fill="url(#ribh)"/><ellipse cx="62" cy="128.5" rx="24" ry="4" fill="#980a12" opacity=".55"/><path d="M36.7 100 Q35 80 45 66 Q52 59.5 62 59.8 Q76 60 82 70 Q88.5 84 87 100 Q86 110 80 113 L44 113 Q37 110 36.7 100Z" fill="url(#knitg)"/><path d="M36.7 100 Q35 80 45 66 Q52 59.5 62 59.8 Q76 60 82 70 Q88.5 84 87 100 Q86 110 80 113 L44 113 Q37 110 36.7 100Z" fill="url(#rib)"/><ellipse cx="67.5" cy="60.2" rx="13" ry="6.4" fill="#e0222c"/><g fill="#f8c8c8" opacity=".9"><circle cx="59" cy="58.5" r="1.3"/><circle cx="64" cy="56.5" r="1.4"/><circle cx="70" cy="57" r="1.3"/><circle cx="75.5" cy="59" r="1.4"/><circle cx="78" cy="62.5" r="1.2"/><circle cx="62.5" cy="62" r="1"/><circle cx="68" cy="60.5" r="1"/></g></g><g filter="url(#knit)" opacity=".3"><path d="M36.7 100 Q35 80 45 66 Q52 59.5 62 59.8 Q76 60 82 70 Q88.5 84 87 100 Q86 110 80 113 L44 113 Q37 110 36.7 100Z M27.5 150 Q26 134 40 127 L84 127 Q97 134 96 150 Q96 166 88 172 L87 212 L42 212 L36 172 Q27 166 27.5 150Z" fill="#000"/></g><g filter="url(#g05)"><ellipse cx="61" cy="101.6" rx="17.8" ry="13.4" fill="url(#face)"/><path d="M42.5 103 Q44 87 61 86 Q78 87 79.5 102 Q73 89 61 88.4 Q49 89 42.5 103Z" fill="#d8141e"/><ellipse cx="58.6" cy="89.6" rx="3.6" ry="2.8" fill="#f4dcd6"/><circle cx="51.2" cy="98.6" r="2.2" fill="#f4f0e8"/><circle cx="65.7" cy="97.8" r="2.2" fill="#f4f0e8"/><circle cx="51.4" cy="98.8" r="1.5" fill="#111"/><circle cx="65.9" cy="98" r="1.5" fill="#111"/><ellipse cx="47" cy="105" rx="3" ry="2" fill="#e89880" opacity=".5"/><ellipse cx="73" cy="104" rx="3" ry="2" fill="#e89880" opacity=".5"/><path d="M54 108 Q59 110.6 65 107.4" fill="none" stroke="#5a3010" stroke-width=".8"/></g><g><path d="M36.8 133 L42 132.5 L51 213 L46.4 214 Z" fill="#e6c898"/><path d="M77.6 131 L83 131.3 L80 220 L75.6 220 Z" fill="#ecd0a0"/><circle cx="39.6" cy="142.8" r="7.2" fill="#1e4a2c"/><circle cx="80.1" cy="141" r="7.4" fill="#1e4a2c"/><path d="M36 146 Q38 136 44 138" stroke="#36583e" stroke-width="1.4" fill="none"/><path d="M40 212 L52 208 L53 215 L42 218Z" fill="#1a1a1c"/><path d="M70 213 L84 213 L84 219 L70 219Z" fill="#1a1a1c"/><path d="M17.8 224 L70 211.5 L76 215 L30 231.5 L20 230Z" fill="#e8cfa4"/><path d="M44 227 L86 213 L92 217 L58 236 L46 234Z" fill="#dfc394"/><path d="M17.8 224 L20 230 L30 231.5 L29 228Z" fill="#b89a68"/><ellipse cx="48" cy="215" rx="9" ry="2.2" fill="#e8d0a4" transform="rotate(-12 48 215)"/><ellipse cx="77" cy="213.5" rx="11" ry="2.4" fill="#f0d8ac" transform="rotate(-4 77 213.5)"/></g><g filter="url(#g05)"><ellipse cx="120" cy="232" rx="14" ry="8.5" fill="#131318"/><ellipse cx="147" cy="236" rx="15" ry="8" fill="#131318"/><path d="M116 206 L136 210 L134 226 L118 224Z" fill="#5a0a0e"/><path d="M150 160 L172 150 L170 200 L150 200Z" fill="#c8101a"/></g><g filter="url(#fluff)"><ellipse cx="130" cy="170" rx="30" ry="36" fill="url(#beard)"/><ellipse cx="118" cy="134" rx="12" ry="10" fill="#f4efe4"/><ellipse cx="146" cy="140" rx="13" ry="12" fill="#f2ece0"/><ellipse cx="160" cy="152" rx="8" ry="12" fill="#e8e0d0"/></g><g filter="url(#g05)"><path d="M111 126 Q126 120 143 130 L142 146 Q126 150 112 144Z" fill="#ecc494"/><ellipse cx="137" cy="140" rx="5" ry="3.5" fill="#e8a088" opacity=".7"/><circle cx="119.9" cy="132.2" r="3.2" fill="#fff"/><circle cx="130.6" cy="132.2" r="3.2" fill="#fff"/><circle cx="120.6" cy="132.6" r="1.7" fill="#111"/><circle cx="131.2" cy="132.6" r="1.7" fill="#111"/><ellipse cx="122.2" cy="140.5" rx="5.4" ry="5" fill="#e6bc80"/><ellipse cx="120.8" cy="139" rx="2" ry="1.6" fill="#f8e0b8"/><path d="M170 50.5 Q176 46 181.5 51 Q183 100 166.5 149.6 Q165 137 160 133 Q151 125.5 143.4 123.3 Q128 119.5 110.5 120.8 Q140 92 170 50.5Z" fill="url(#hat)"/><circle cx="176" cy="43.7" r="7.4" fill="#fbf4f0"/><circle cx="178" cy="46" r="5" fill="#e8dcd6" opacity=".6"/><path d="M131 196 L180 204 L179 226 L131 215Z" fill="#a8844e"/><path d="M131 201 L180 210 M131 208 L179 218" stroke="#6a4c24" stroke-width="1.4" fill="none"/><path d="M131 196 L180 204 L180 207 L131 199Z" fill="#c8a66c"/><path d="M151 196 L156 197 L154 222 L149 221Z" fill="#d4c4a0"/><circle cx="149" cy="186.5" r="8.2" fill="#e6c48c"/><circle cx="147" cy="184" r="3.5" fill="#f4dcae" opacity=".8"/><path d="M81 158.7 L97 157 L103.7 194 L94 197.6 Z" fill="#ece2cc"/><path d="M81 158.7 L86 158 L96 196.8 L94 197.6Z" fill="#c8b898"/></g></svg></div><div class="abs " style="left:596px;top:341px;width:196px;height:246px;background:#1a1810;overflow:hidden"><svg class="abs" style="left:0;top:0" width="196" height="246" viewBox="0 0 196 246"><defs>
<filter id="r6" x="-50%" y="-50%" width="200%" height="200%"><feGaussianBlur stdDeviation="6"/></filter>
<filter id="r3" x="-50%" y="-50%" width="200%" height="200%"><feGaussianBlur stdDeviation="3"/></filter>
<filter id="r05" x="-10%" y="-10%" width="120%" height="120%"><feGaussianBlur stdDeviation=".45"/></filter>
<radialGradient id="ball" cx=".56" cy=".62" r=".62" fx=".6" fy=".66"><stop offset="0" stop-color="#f05a28"/><stop offset=".3" stop-color="#d03a1a"/><stop offset=".62" stop-color="#b02414"/><stop offset=".85" stop-color="#86160e"/><stop offset="1" stop-color="#560c08"/></radialGradient>
<radialGradient id="glow" cx=".5" cy=".5" r=".5"><stop offset="0" stop-color="#fff0d0"/><stop offset=".25" stop-color="#ffb070" stop-opacity=".9"/><stop offset=".6" stop-color="#f86028" stop-opacity=".45"/><stop offset="1" stop-color="#f04818" stop-opacity="0"/></radialGradient>
<linearGradient id="topsh" x1="0" y1="0" x2="0" y2="1"><stop offset="0" stop-color="#3a0a06" stop-opacity=".75"/><stop offset="1" stop-color="#3a0a06" stop-opacity="0"/></linearGradient>
<filter id="glit" x="0" y="0" width="100%" height="100%"><feTurbulence type="fractalNoise" baseFrequency="1.1" numOctaves="2" seed="11"/><feColorMatrix values="0 0 0 0 1  0 0 0 0 .55  0 0 0 0 .32  2.8 0 0 0 -1.55"/><feComposite in2="SourceGraphic" operator="in"/></filter>
<filter id="glitd" x="0" y="0" width="100%" height="100%"><feTurbulence type="fractalNoise" baseFrequency=".9" numOctaves="2" seed="23"/><feColorMatrix values="0 0 0 0 .25  0 0 0 0 .02  0 0 0 0 .02  0 2.6 0 0 -1.3"/><feComposite in2="SourceGraphic" operator="in"/></filter>
<clipPath id="bc"><circle cx="94.3" cy="147.9" r="74"/></clipPath>
<linearGradient id="cap" x1="0" y1="0" x2="1" y2="0"><stop offset="0" stop-color="#5a5a50"/><stop offset=".2" stop-color="#c8c8c0"/><stop offset=".35" stop-color="#6a3020"/><stop offset=".5" stop-color="#a83828"/><stop offset=".65" stop-color="#d0d0c8"/><stop offset=".8" stop-color="#7a2a20"/><stop offset="1" stop-color="#4a4a44"/></linearGradient>
</defs><rect width="196" height="246" fill="#15120b"/><g filter="url(#r6)"><ellipse cx="18" cy="36" rx="12" ry="12" fill="#565646"/><ellipse cx="55" cy="22" rx="20" ry="10" fill="#5e3c18"/><ellipse cx="30" cy="80" rx="30" ry="22" fill="#1c2210"/><ellipse cx="184" cy="80" rx="12" ry="20" fill="#5e5420"/><ellipse cx="186" cy="148" rx="10" ry="9" fill="#6a6448"/><ellipse cx="176" cy="30" rx="20" ry="22" fill="#33200e"/><ellipse cx="150" cy="110" rx="20" ry="30" fill="#1a2010"/><ellipse cx="20" cy="150" rx="18" ry="40" fill="#0e100a"/><ellipse cx="175" cy="225" rx="24" ry="16" fill="#2c3218"/><ellipse cx="25" cy="225" rx="28" ry="18" fill="#1e2612"/><ellipse cx="110" cy="236" rx="40" ry="10" fill="#20260f"/></g><g stroke-linecap="round" fill="none" filter="url(#r05)"><path d="M63.5 211.2 l2.9 -8.2" stroke="#2c3a16" stroke-width="1.6" opacity=".5"/><path d="M71.7 207.4 l0.3 -8.4" stroke="#44521e" stroke-width="1.6" opacity=".5"/><path d="M82.0 214.9 l1.1 -8.5" stroke="#2c3a16" stroke-width="1.6" opacity=".5"/><path d="M185.7 230.9 l1.7 -8.5" stroke="#44521e" stroke-width="1.6" opacity=".5"/><path d="M9.7 214.1 l1.3 -9.2" stroke="#44521e" stroke-width="1.6" opacity=".5"/><path d="M28.3 209.8 l-6.0 -15.0" stroke="#3a4a1c" stroke-width="1.6" opacity=".5"/><path d="M20.2 228.4 l-5.3 -7.2" stroke="#2c3a16" stroke-width="1.6" opacity=".5"/><path d="M110.6 230.4 l0.2 -13.3" stroke="#222c10" stroke-width="1.6" opacity=".5"/><path d="M91.3 242.9 l-2.8 -10.1" stroke="#3a4a1c" stroke-width="1.6" opacity=".5"/><path d="M137.0 215.0 l2.3 -13.0" stroke="#222c10" stroke-width="1.6" opacity=".5"/><path d="M143.0 216.8 l7.9 -4.7" stroke="#44521e" stroke-width="1.6" opacity=".5"/><path d="M32.3 219.0 l9.8 -7.3" stroke="#2c3a16" stroke-width="1.6" opacity=".5"/><path d="M149.9 228.5 l8.1 -7.7" stroke="#222c10" stroke-width="1.6" opacity=".5"/><path d="M116.5 228.8 l-1.2 -16.4" stroke="#222c10" stroke-width="1.6" opacity=".5"/><path d="M92.9 232.2 l-11.8 -9.3" stroke="#44521e" stroke-width="1.6" opacity=".5"/><path d="M55.8 220.8 l3.0 -7.7" stroke="#44521e" stroke-width="1.6" opacity=".5"/><path d="M69.7 230.0 l0.1 -10.2" stroke="#222c10" stroke-width="1.6" opacity=".5"/><path d="M25.4 215.2 l-3.5 -16.4" stroke="#2c3a16" stroke-width="1.6" opacity=".5"/><path d="M32.6 221.5 l-4.0 -8.5" stroke="#44521e" stroke-width="1.6" opacity=".5"/><path d="M169.3 216.4 l-1.8 -11.4" stroke="#44521e" stroke-width="1.6" opacity=".5"/><path d="M187.7 211.2 l-6.3 -8.2" stroke="#3a4a1c" stroke-width="1.6" opacity=".5"/><path d="M2.4 239.1 l-6.5 -8.6" stroke="#3a4a1c" stroke-width="1.6" opacity=".5"/><path d="M82.1 220.1 l2.8 -17.3" stroke="#2c3a16" stroke-width="1.6" opacity=".5"/><path d="M89.5 240.7 l12.2 -8.4" stroke="#44521e" stroke-width="1.6" opacity=".5"/><path d="M78.0 221.2 l-0.2 -12.0" stroke="#3a4a1c" stroke-width="1.6" opacity=".5"/><path d="M13.2 213.6 l-7.2 -8.8" stroke="#2c3a16" stroke-width="1.6" opacity=".5"/><path d="M20.1 228.2 l1.7 -17.4" stroke="#2c3a16" stroke-width="1.6" opacity=".5"/><path d="M13.8 213.5 l-3.4 -13.9" stroke="#222c10" stroke-width="1.6" opacity=".5"/><path d="M118.0 224.4 l-9.1 -9.1" stroke="#44521e" stroke-width="1.6" opacity=".5"/><path d="M94.2 217.8 l-10.3 -11.6" stroke="#222c10" stroke-width="1.6" opacity=".5"/><path d="M93.8 233.4 l0.6 -10.0" stroke="#222c10" stroke-width="1.6" opacity=".5"/><path d="M28.7 227.3 l-11.0 -7.5" stroke="#2c3a16" stroke-width="1.6" opacity=".5"/><path d="M136.5 215.7 l-2.5 -9.3" stroke="#3a4a1c" stroke-width="1.6" opacity=".5"/><path d="M104.4 236.9 l-3.4 -9.7" stroke="#3a4a1c" stroke-width="1.6" opacity=".5"/><path d="M158.0 238.6 l5.1 -8.9" stroke="#44521e" stroke-width="1.6" opacity=".5"/><path d="M69.7 206.2 l-8.9 -6.1" stroke="#222c10" stroke-width="1.6" opacity=".5"/><path d="M38.0 229.8 l-4.8 -15.3" stroke="#222c10" stroke-width="1.6" opacity=".5"/><path d="M187.2 220.0 l-5.5 -8.7" stroke="#3a4a1c" stroke-width="1.6" opacity=".5"/><path d="M66.2 224.8 l12.2 -7.1" stroke="#2c3a16" stroke-width="1.6" opacity=".5"/><path d="M94.0 231.8 l5.4 -7.0" stroke="#2c3a16" stroke-width="1.6" opacity=".5"/></g><rect x="84" y="57.5" width="31" height="19" fill="url(#cap)" filter="url(#r05)"/><circle cx="94.3" cy="147.9" r="74" fill="url(#ball)"/><g clip-path="url(#bc)"><rect x="20" y="74" width="150" height="60" fill="url(#topsh)"/><ellipse cx="110" cy="172" rx="42" ry="40" fill="url(#glow)"/><ellipse cx="100" cy="120" rx="30" ry="16" fill="#e85028" opacity=".35" filter="url(#r6)"/><rect x="20" y="74" width="150" height="150" fill="#000" filter="url(#glitd)" opacity=".7"/><rect x="20" y="74" width="150" height="150" fill="#000" filter="url(#glit)" opacity=".75"/><circle cx="94.3" cy="147.9" r="74" fill="none" stroke="#3a0806" stroke-width="5" opacity=".5" filter="url(#r3)"/></g><g stroke-linecap="round" fill="none" filter="url(#r05)"><path d="M112 -2 Q116 20 124 42" stroke="#5a4a20" stroke-width="4"/><path d="M126.8 39.8 Q101.7 39.7 80.7 53.5" stroke="#33480f" stroke-width="4.2"/><path d="M125.5 36.8 Q104.1 30.1 84.0 40.0" stroke="#33480f" stroke-width="4.2"/><path d="M120.9 39.9 Q103.5 27.1 82.0 26.0" stroke="#33480f" stroke-width="4.2"/><path d="M122.2 40.0 Q99.9 46.2 88.0 66.0" stroke="#33480f" stroke-width="4.2"/><path d="M127.3 36.0 Q99.9 49.6 91.4 79.0" stroke="#33480f" stroke-width="4.2"/><path d="M122.7 41.5 Q103.6 50.4 96.0 70.0" stroke="#33480f" stroke-width="4.2"/><path d="M125.3 33.7 Q104.5 53.4 103.0 82.0" stroke="#33480f" stroke-width="4.2"/><path d="M120.5 33.5 Q109.1 57.6 112.8 84.0" stroke="#33480f" stroke-width="4.2"/><path d="M126.7 40.1 Q119.8 57.4 120.0 76.0" stroke="#33480f" stroke-width="4.2"/><path d="M120.7 40.3 Q127.3 54.4 128.0 70.0" stroke="#33480f" stroke-width="4.2"/><path d="M127.3 38.6 Q136.2 59.6 132.0 82.0" stroke="#33480f" stroke-width="4.2"/><path d="M122.3 37.5 Q139.3 54.8 139.6 79.0" stroke="#33480f" stroke-width="4.2"/><path d="M120.5 32.1 Q138.8 41.0 146.0 60.0" stroke="#33480f" stroke-width="4.2"/><path d="M127.3 38.5 Q147.5 43.1 156.0 62.0" stroke="#33480f" stroke-width="4.2"/><path d="M123.7 41.3 Q151.7 42.4 167.6 65.5" stroke="#33480f" stroke-width="4.2"/><path d="M123.0 40.7 Q143.8 36.1 160.0 50.0" stroke="#33480f" stroke-width="4.2"/><path d="M126.1 34.1 Q152.8 30.4 171.7 49.5" stroke="#33480f" stroke-width="4.2"/><path d="M121.5 34.9 Q144.8 28.6 166.0 40.0" stroke="#33480f" stroke-width="4.2"/><path d="M121.4 37.9 Q144.9 23.6 171.7 29.4" stroke="#33480f" stroke-width="4.2"/><path d="M121.6 36.2 Q139.6 26.3 160.0 28.0" stroke="#33480f" stroke-width="4.2"/><path d="M120.5 41.1 Q98.8 41.3 80.7 53.5" stroke="#4a6a18" stroke-width="2.6"/><path d="M122.3 36.6 Q102.5 30.6 84.0 40.0" stroke="#6a8a22" stroke-width="2.6"/><path d="M124.2 41.0 Q105.3 27.2 82.0 26.0" stroke="#86a42c" stroke-width="2.6"/><path d="M122.9 41.2 Q100.5 46.6 88.0 66.0" stroke="#a8bc3c" stroke-width="2.6"/><path d="M123.5 37.3 Q98.3 51.1 91.4 79.0" stroke="#5a7a1e" stroke-width="2.6"/><path d="M123.7 32.2 Q102.3 45.6 96.0 70.0" stroke="#93ad33" stroke-width="2.6"/><path d="M123.0 33.8 Q103.4 53.9 103.0 82.0" stroke="#4a6a18" stroke-width="2.6"/><path d="M119.5 40.0 Q109.6 61.0 112.8 84.0" stroke="#6a8a22" stroke-width="2.6"/><path d="M120.9 36.7 Q116.5 56.3 120.0 76.0" stroke="#86a42c" stroke-width="2.6"/><path d="M125.3 37.6 Q129.9 53.5 128.0 70.0" stroke="#a8bc3c" stroke-width="2.6"/><path d="M122.1 37.2 Q133.8 58.1 132.0 82.0" stroke="#5a7a1e" stroke-width="2.6"/><path d="M123.9 39.8 Q139.6 56.3 139.6 79.0" stroke="#93ad33" stroke-width="2.6"/><path d="M120.3 37.6 Q137.7 43.7 146.0 60.0" stroke="#4a6a18" stroke-width="2.6"/><path d="M121.5 34.8 Q145.6 39.8 156.0 62.0" stroke="#6a8a22" stroke-width="2.6"/><path d="M125.7 37.1 Q153.7 40.8 167.6 65.5" stroke="#86a42c" stroke-width="2.6"/><path d="M124.0 39.6 Q144.6 35.8 160.0 50.0" stroke="#a8bc3c" stroke-width="2.6"/><path d="M126.8 36.4 Q152.5 31.7 171.7 49.5" stroke="#5a7a1e" stroke-width="2.6"/><path d="M124.4 37.1 Q145.8 30.2 166.0 40.0" stroke="#93ad33" stroke-width="2.6"/><path d="M123.6 38.9 Q145.7 24.5 171.7 29.4" stroke="#4a6a18" stroke-width="2.6"/><path d="M123.1 37.3 Q140.2 27.1 160.0 28.0" stroke="#6a8a22" stroke-width="2.6"/><path d="M117.8 14.4 Q101.0 9.1 84.0 14.0" stroke="#33480f" stroke-width="4.2"/><path d="M119.6 13.8 Q101.0 3.9 80.0 2.0" stroke="#33480f" stroke-width="4.2"/><path d="M121.5 7.6 Q107.2 1.3 92.0 -2.0" stroke="#33480f" stroke-width="4.2"/><path d="M118.5 14.4 Q107.3 15.5 100.0 24.0" stroke="#33480f" stroke-width="4.2"/><path d="M120.7 6.4 Q102.4 16.2 96.0 36.0" stroke="#33480f" stroke-width="4.2"/><path d="M115.0 9.4 Q131.3 0.2 150.0 -2.0" stroke="#33480f" stroke-width="4.2"/><path d="M114.6 7.4 Q137.4 0.9 160.0 8.0" stroke="#33480f" stroke-width="4.2"/><path d="M114.6 11.7 Q143.6 3.8 170.0 18.0" stroke="#33480f" stroke-width="4.2"/><path d="M120.3 14.0 Q148.5 9.6 172.0 26.0" stroke="#33480f" stroke-width="4.2"/><path d="M115.2 12.2 Q128.2 12.6 140.0 18.0" stroke="#33480f" stroke-width="4.2"/><path d="M119.3 6.4 Q126.6 2.2 134.0 -2.0" stroke="#33480f" stroke-width="4.2"/><path d="M121.1 14.7 Q113.5 6.3 106.0 -2.0" stroke="#33480f" stroke-width="4.2"/><path d="M115.8 14.5 Q135.0 15.8 148.0 30.0" stroke="#33480f" stroke-width="4.2"/><path d="M117.2 9.9 Q111.6 19.2 110.0 30.0" stroke="#33480f" stroke-width="4.2"/><path d="M121.9 13.3 Q102.9 8.0 84.0 14.0" stroke="#86a42c" stroke-width="2.6"/><path d="M115.3 9.3 Q98.4 2.1 80.0 2.0" stroke="#a8bc3c" stroke-width="2.6"/><path d="M118.1 8.4 Q105.6 1.9 92.0 -2.0" stroke="#5a7a1e" stroke-width="2.6"/><path d="M115.6 8.2 Q104.6 13.0 100.0 24.0" stroke="#93ad33" stroke-width="2.6"/><path d="M119.8 5.2 Q101.7 15.8 96.0 36.0" stroke="#4a6a18" stroke-width="2.6"/><path d="M118.4 9.4 Q133.1 0.5 150.0 -2.0" stroke="#6a8a22" stroke-width="2.6"/><path d="M114.1 8.3 Q137.0 1.3 160.0 8.0" stroke="#86a42c" stroke-width="2.6"/><path d="M119.0 10.1 Q146.1 3.9 170.0 18.0" stroke="#a8bc3c" stroke-width="2.6"/><path d="M114.5 14.9 Q145.5 8.9 172.0 26.0" stroke="#5a7a1e" stroke-width="2.6"/><path d="M120.3 14.7 Q130.5 14.4 140.0 18.0" stroke="#93ad33" stroke-width="2.6"/><path d="M114.8 7.7 Q124.4 2.8 134.0 -2.0" stroke="#4a6a18" stroke-width="2.6"/><path d="M114.3 12.8 Q110.2 5.4 106.0 -2.0" stroke="#6a8a22" stroke-width="2.6"/><path d="M116.2 6.3 Q136.8 11.8 148.0 30.0" stroke="#86a42c" stroke-width="2.6"/><path d="M117.4 14.1 Q112.1 21.3 110.0 30.0" stroke="#a8bc3c" stroke-width="2.6"/><path d="M104.2 45.0 Q91.7 47.1 80.7 53.5" stroke="#c4d050" stroke-width="1"/><path d="M104.8 32.6 Q94.0 27.2 82.0 26.0" stroke="#c4d050" stroke-width="1"/><path d="M109.1 56.5 Q97.3 65.4 91.4 79.0" stroke="#c4d050" stroke-width="1"/><path d="M114.3 57.8 Q105.7 68.5 103.0 82.0" stroke="#c4d050" stroke-width="1"/><path d="M121.9 55.1 Q119.7 65.4 120.0 76.0" stroke="#c4d050" stroke-width="1"/><path d="M127.3 57.8 Q131.8 69.5 132.0 82.0" stroke="#c4d050" stroke-width="1"/><path d="M133.6 47.9 Q141.3 52.5 146.0 60.0" stroke="#c4d050" stroke-width="1"/><path d="M143.3 50.4 Q157.7 54.3 167.6 65.5" stroke="#c4d050" stroke-width="1"/><path d="M145.2 43.2 Q159.4 42.4 171.7 49.5" stroke="#c4d050" stroke-width="1"/><path d="M145.2 34.1 Q157.9 28.6 171.7 29.4" stroke="#c4d050" stroke-width="1"/></g><g filter="url(#r05)"><circle cx="120" cy="46" r="3" fill="#b86a28"/><circle cx="126" cy="49" r="2.6" fill="#c87a30"/><circle cx="131" cy="45" r="2.4" fill="#a85a20"/><circle cx="124" cy="53" r="2.2" fill="#c06a26"/></g><g stroke-linecap="round" fill="none" opacity=".5" filter="url(#r3)"><path d="M2 20 L10 50 M14 0 L8 24" stroke="#4a6a20" stroke-width="3"/></g></svg></div>
<div class="abs " style="left:859px;top:65px;width:136px;height:25px;background:#fbfbfb;border:1px solid #c9c9cf;border-bottom-color:#bfbfc6"></div><span class="abs" style="left:914.50px;top:72.23px;font-size:11.3px;line-height:13.3px;white-space:pre;color:#505050;font-weight:400;transform:scaleX(0.9515);transform-origin:0 50%;">Save</span><div class="abs " style="left:859px;top:92px;width:136px;height:25px;background:#fbfbfb;border:1px solid #c9c9cf;border-bottom-color:#bfbfc6"></div><span class="abs" style="left:916.90px;top:99.03px;font-size:11.3px;line-height:13.3px;white-space:pre;color:#505050;font-weight:400;transform:scaleX(1.0222);transform-origin:0 50%;">Edit</span><svg class="abs" style="left:999px;top:94px" width="16" height="16" viewBox="0 0 16 16"><rect x=".5" y=".5" width="15" height="15" fill="#f4f4f4" stroke="#4d4848"/><rect x="1" y="1" width="14" height="2" fill="#fff"/><rect x="1" y="3" width="14" height="4" fill="#3a86d8"/><rect x="1" y="4" width="14" height="1.5" fill="#1d62c0"/><rect x="1" y="8" width="14" height="1" fill="#b8b8b8"/><rect x="1" y="11" width="14" height="1" fill="#b8b8b8"/><rect x="1" y="13" width="14" height="2" fill="#e2e2e2"/><rect x="2" y="9.5" width="1" height="1" fill="#666"/><rect x="2" y="12.5" width="1" height="1" fill="#666"/><rect x="0" y="15" width="1" height="1" fill="#d020c0"/></svg><svg class="abs" style="left:877px;top:135px" width="15" height="15" viewBox="0 0 15 15" shape-rendering="crispEdges"><path d="M1.5 1.5H13.5V13" fill="none" stroke="#222" stroke-width="1" stroke-dasharray="1 1"/><rect x="1.5" y="4.5" width="9" height="9" fill="#f4f4f4" stroke="#111"/></svg><div class="abs " style="left:900px;top:133px;width:57px;height:19px;background:#fff"></div><div class="abs " style="left:941px;top:133px;width:16px;height:19px;background:#f3f3f3;border:1px solid #707070"><svg class="abs" style="left:0;top:0" width="14" height="17"><path d="M3.2 6.3 L7 10.6 L10.8 6.3" fill="none" stroke="#111" stroke-width="1.8"/></svg></div><span class="abs" style="left:904.10px;top:136.67px;font-size:11.5px;line-height:13.5px;white-space:pre;color:#000;font-weight:400;transform:scaleX(1.1518);transform-origin:0 50%;">404</span><div class="abs " style="left:980px;top:133px;width:57px;height:19px;background:#fff"></div><div class="abs " style="left:1021px;top:133px;width:16px;height:19px;background:#f3f3f3;border:1px solid #707070"><svg class="abs" style="left:0;top:0" width="14" height="17"><path d="M3.2 6.3 L7 10.6 L10.8 6.3" fill="none" stroke="#111" stroke-width="1.8"/></svg></div><span class="abs" style="left:984.20px;top:136.67px;font-size:11.5px;line-height:13.5px;white-space:pre;color:#000;font-weight:400;transform:scaleX(1.1309);transform-origin:0 50%;">404</span><span class="abs" style="left:965.30px;top:137.22px;font-size:12.5px;line-height:14.5px;white-space:pre;color:#000;font-weight:400;transform:scaleX(1.1520);transform-origin:0 50%;">x</span><span class="abs" style="left:936.60px;top:162.92px;font-size:12.5px;line-height:14.5px;white-space:pre;color:#000;font-weight:400;transform:scaleX(0.9576);transform-origin:0 50%;">Margin</span><div class="abs " style="left:980px;top:160px;width:43px;height:18px;background:#fff"></div><span class="abs" style="left:984.60px;top:162.92px;font-size:12.5px;line-height:14.5px;white-space:pre;color:#000;font-weight:400;transform:scaleX(1.0930);transform-origin:0 50%;">4</span><svg class="abs" style="left:1009.5px;top:160px" width="14" height="18" viewBox="0 0 14 18"><rect x=".5" y=".5" width="12" height="7" rx="1.6" fill="#efefef" stroke="#858585"/><polygon points="2.6,6.2 10.4,6.2 6.5,2.4" fill="#1a1a1a"/><rect x=".5" y="9.5" width="12" height="7" rx="1.6" fill="#efefef" stroke="#858585"/><polygon points="2.6,10.8 10.4,10.8 6.5,14.6" fill="#1a1a1a"/></svg><span class="abs" style="left:938.70px;top:184.72px;font-size:12.5px;line-height:14.5px;white-space:pre;color:#000;font-weight:400;transform:scaleX(0.9364);transform-origin:0 50%;">Round</span><div class="abs " style="left:980px;top:182px;width:43px;height:18px;background:#fff"></div><span class="abs" style="left:984.60px;top:184.72px;font-size:12.5px;line-height:14.5px;white-space:pre;color:#000;font-weight:400;transform:scaleX(1.0355);transform-origin:0 50%;">0</span><svg class="abs" style="left:1009.5px;top:182px" width="14" height="18" viewBox="0 0 14 18"><rect x=".5" y=".5" width="12" height="7" rx="1.6" fill="#efefef" stroke="#858585"/><polygon points="2.6,6.2 10.4,6.2 6.5,2.4" fill="#1a1a1a"/><rect x=".5" y="9.5" width="12" height="7" rx="1.6" fill="#efefef" stroke="#858585"/><polygon points="2.6,10.8 10.4,10.8 6.5,14.6" fill="#1a1a1a"/></svg><span class="abs" style="left:908.70px;top:211.82px;font-size:12.5px;line-height:14.5px;white-space:pre;color:#000;font-weight:400;transform:scaleX(0.9622);transform-origin:0 50%;">Background</span><div class="abs " style="left:979px;top:208px;width:47px;height:20px;background:#eceae3;border:1px solid;border-color:#fff #8e8e8e #8e8e8e #fff;box-shadow:inset -1px -1px 0 #b4b4b4"></div><div class="abs " style="left:982px;top:212px;width:30px;height:13px;background:#fff;border:1px solid #000"></div><div class="abs " style="left:1015px;top:211px;width:1px;height:14px;background:#9a9a9a"></div><div class="abs " style="left:1016px;top:211px;width:1px;height:14px;background:#fff"></div><svg class="abs" style="left:1017px;top:215px" width="7" height="6"><polygon points="0.5,1.5 6.5,1.5 3.5,4.8" fill="#000"/></svg><div class="abs" style="left:957px;top:238.5px;width:14px;height:14px"><svg width="14" height="14" viewBox="0 0 14 14"><path d="M7 .9 L9.1 4.6 L13.3 5.3 L10.4 8.5 L11 12.9 L7 11.1 L3 12.9 L3.6 8.5 L.7 5.3 L4.9 4.6Z" fill="#f7d11c" stroke="#6e5206" stroke-width="1.1" stroke-linejoin="round"/><path d="M7 2.6 L8.2 5.6 L7 9.5 L4.6 6.2z" fill="#fff7a0" opacity=".75"/><circle cx="5.6" cy="5.6" r="1" fill="#fff"/></svg></div><div class="abs " style="left:979px;top:235px;width:50px;height:20px;background:#fbfbfb;border:1px solid #c9c9cf"></div><span class="abs" style="left:987.80px;top:240.03px;font-size:11.3px;line-height:13.3px;white-space:pre;color:#3c3c3c;font-weight:400;transform:scaleX(0.9681);transform-origin:0 50%;">Frame</span><div class="abs " style="left:979px;top:257px;width:50px;height:20px;background:#fbfbfb;border:1px solid #c9c9cf"></div><span class="abs" style="left:990.80px;top:261.83px;font-size:11.3px;line-height:13.3px;white-space:pre;color:#3c3c3c;font-weight:400;transform:scaleX(1.0673);transform-origin:0 50%;">Filter</span>
<div class="abs " style="left:859px;top:284px;width:164px;height:430px;background:#fff;overflow:hidden"><svg width="0" height="0" style="position:absolute"><defs><pattern id="lh" width="8" height="8" patternUnits="userSpaceOnUse"><path d="M0 0L8 8M8 0L0 8" stroke="#eeeeee" stroke-width="1" fill="none" shape-rendering="auto"/></pattern><pattern id="lhs" width="8" height="8" patternUnits="userSpaceOnUse"><path d="M0 0L8 8M8 0L0 8" stroke="#c8c8ff" stroke-width="1" fill="none" shape-rendering="auto"/></pattern></defs></svg><div class="abs" style="left:7px;top:7px;width:42px;height:42px;background:#c0c0ff;"><svg width="42" height="42" viewBox="0 0 42 42" shape-rendering="crispEdges"><rect x="1" y="1" width="40" height="40" fill="url(#lhs)"/><rect x=".5" y=".5" width="41" height="41" fill="none" stroke="#747474" stroke-dasharray="1 1"/><g stroke="#6a6a6a" stroke-dasharray="1 1" stroke-width="2" fill="none"><path stroke-width="1" d="M0 16.5H42M1 17.5H42" /><path d="M22 16V42" /></g><g stroke="#707070" stroke-dasharray="1 1" stroke-width="1" fill="none"></g></svg></div><div class="abs" style="left:-859px;top:-284px"><span class="abs" style="left:867.70px;top:335.49px;font-size:11px;line-height:13px;white-space:pre;color:#000;font-weight:400;transform:scaleX(1.0065);transform-origin:0 50%;">down...</span></div><div class="abs" style="left:56px;top:7px;width:42px;height:42px;"><svg width="42" height="42" viewBox="0 0 42 42" shape-rendering="crispEdges"><rect x="1" y="1" width="40" height="40" fill="url(#lh)"/><rect x=".5" y=".5" width="41" height="41" fill="none" stroke="#747474" stroke-dasharray="1 1"/><g stroke="#6a6a6a" stroke-dasharray="1 1" stroke-width="2" fill="none"><path stroke-width="1" d="M0 21.5H42M1 22.5H42" /><path d="M22 21V42" /></g><g stroke="#707070" stroke-dasharray="1 1" stroke-width="1" fill="none"></g></svg></div><div class="abs" style="left:-859px;top:-284px"><span class="abs" style="left:916.70px;top:335.49px;font-size:11px;line-height:13px;white-space:pre;color:#000;font-weight:400;transform:scaleX(1.0009);transform-origin:0 50%;">down...</span></div><div class="abs" style="left:105px;top:7px;width:42px;height:42px;"><svg width="42" height="42" viewBox="0 0 42 42" shape-rendering="crispEdges"><rect x="1" y="1" width="40" height="40" fill="url(#lh)"/><rect x=".5" y=".5" width="41" height="41" fill="none" stroke="#747474" stroke-dasharray="1 1"/><g stroke="#6a6a6a" stroke-dasharray="1 1" stroke-width="2" fill="none"><path stroke-width="1" d="M0 16.5H42M1 17.5H42" /><path d="M15 16V42" /><path d="M29 16V42" /></g><g stroke="#707070" stroke-dasharray="1 1" stroke-width="1" fill="none"></g></svg></div><div class="abs" style="left:-859px;top:-284px"><span class="abs" style="left:965.50px;top:335.49px;font-size:11px;line-height:13px;white-space:pre;color:#000;font-weight:400;transform:scaleX(1.0009);transform-origin:0 50%;">down...</span></div><div class="abs" style="left:7px;top:69px;width:42px;height:42px;"><svg width="42" height="42" viewBox="0 0 42 42" shape-rendering="crispEdges"><rect x="1" y="1" width="40" height="40" fill="url(#lh)"/><rect x=".5" y=".5" width="41" height="41" fill="none" stroke="#747474" stroke-dasharray="1 1"/><g stroke="#6a6a6a" stroke-dasharray="1 1" stroke-width="2" fill="none"><path stroke-width="1" d="M0 21.5H42M1 22.5H42" /><path d="M15 21V42" /><path d="M29 21V42" /></g><g stroke="#707070" stroke-dasharray="1 1" stroke-width="1" fill="none"></g></svg></div><div class="abs" style="left:-859px;top:-284px"><span class="abs" style="left:867.70px;top:397.49px;font-size:11px;line-height:13px;white-space:pre;color:#000;font-weight:400;transform:scaleX(1.0065);transform-origin:0 50%;">down...</span></div><div class="abs" style="left:56px;top:69px;width:42px;height:42px;"><svg width="42" height="42" viewBox="0 0 42 42" shape-rendering="crispEdges"><rect x="1" y="1" width="40" height="40" fill="url(#lh)"/><rect x=".5" y=".5" width="41" height="41" fill="none" stroke="#747474" stroke-dasharray="1 1"/><g stroke="#6a6a6a" stroke-dasharray="1 1" stroke-width="2" fill="none"><path stroke-width="1" d="M0 25.5H42M1 26.5H42" /><path d="M22 0V25" /></g><g stroke="#707070" stroke-dasharray="1 1" stroke-width="1" fill="none"></g></svg></div><div class="abs" style="left:-859px;top:-284px"><span class="abs" style="left:916.70px;top:397.49px;font-size:11px;line-height:13px;white-space:pre;color:#000;font-weight:400;transform:scaleX(1.0009);transform-origin:0 50%;">down...</span></div><div class="abs" style="left:105px;top:69px;width:42px;height:42px;"><svg width="42" height="42" viewBox="0 0 42 42" shape-rendering="crispEdges"><rect x="1" y="1" width="40" height="40" fill="url(#lh)"/><rect x=".5" y=".5" width="41" height="41" fill="none" stroke="#747474" stroke-dasharray="1 1"/><g stroke="#6a6a6a" stroke-dasharray="1 1" stroke-width="2" fill="none"><path stroke-width="1" d="M0 21.5H42M1 22.5H42" /><path d="M22 0V21" /></g><g stroke="#707070" stroke-dasharray="1 1" stroke-width="1" fill="none"></g></svg></div><div class="abs" style="left:-859px;top:-284px"><span class="abs" style="left:965.50px;top:397.49px;font-size:11px;line-height:13px;white-space:pre;color:#000;font-weight:400;transform:scaleX(1.0009);transform-origin:0 50%;">down...</span></div><div class="abs" style="left:7px;top:131px;width:42px;height:42px;"><svg width="42" height="42" viewBox="0 0 42 42" shape-rendering="crispEdges"><rect x="1" y="1" width="40" height="40" fill="url(#lh)"/><rect x=".5" y=".5" width="41" height="41" fill="none" stroke="#747474" stroke-dasharray="1 1"/><g stroke="#6a6a6a" stroke-dasharray="1 1" stroke-width="2" fill="none"><path stroke-width="1" d="M0 21.5H42M1 22.5H42" /><path d="M27 0V21" /><path d="M17 21V42" /></g><g stroke="#707070" stroke-dasharray="1 1" stroke-width="1" fill="none"></g></svg></div><div class="abs" style="left:-859px;top:-284px"><span class="abs" style="left:867.70px;top:459.49px;font-size:11px;line-height:13px;white-space:pre;color:#000;font-weight:400;transform:scaleX(1.0065);transform-origin:0 50%;">down...</span></div><div class="abs" style="left:56px;top:131px;width:42px;height:42px;"><svg width="42" height="42" viewBox="0 0 42 42" shape-rendering="crispEdges"><rect x="1" y="1" width="40" height="40" fill="url(#lh)"/><rect x=".5" y=".5" width="41" height="41" fill="none" stroke="#747474" stroke-dasharray="1 1"/><g stroke="#6a6a6a" stroke-dasharray="1 1" stroke-width="2" fill="none"><path stroke-width="1" d="M0 21.5H42M1 22.5H42" /><path d="M17 0V21" /><path d="M27 21V42" /></g><g stroke="#707070" stroke-dasharray="1 1" stroke-width="1" fill="none"></g></svg></div><div class="abs" style="left:-859px;top:-284px"><span class="abs" style="left:916.70px;top:459.49px;font-size:11px;line-height:13px;white-space:pre;color:#000;font-weight:400;transform:scaleX(1.0009);transform-origin:0 50%;">down...</span></div><div class="abs" style="left:105px;top:131px;width:42px;height:42px;"><svg width="42" height="42" viewBox="0 0 42 42" shape-rendering="crispEdges"><rect x="1" y="1" width="40" height="40" fill="url(#lh)"/><rect x=".5" y=".5" width="41" height="41" fill="none" stroke="#747474" stroke-dasharray="1 1"/><g stroke="#6a6a6a" stroke-dasharray="1 1" stroke-width="2" fill="none"><path stroke-width="1" d="M0 16.5H42M1 17.5H42" /><path d="M22 0V16" /><path d="M15 16V42" /><path d="M29 16V42" /></g><g stroke="#707070" stroke-dasharray="1 1" stroke-width="1" fill="none"></g></svg></div><div class="abs" style="left:-859px;top:-284px"><span class="abs" style="left:965.50px;top:459.49px;font-size:11px;line-height:13px;white-space:pre;color:#000;font-weight:400;transform:scaleX(1.0009);transform-origin:0 50%;">down...</span></div><div class="abs" style="left:7px;top:193px;width:42px;height:42px;"><svg width="42" height="42" viewBox="0 0 42 42" shape-rendering="crispEdges"><rect x="1" y="1" width="40" height="40" fill="url(#lh)"/><rect x=".5" y=".5" width="41" height="41" fill="none" stroke="#747474" stroke-dasharray="1 1"/><g stroke="#6a6a6a" stroke-dasharray="1 1" stroke-width="2" fill="none"><path stroke-width="1" d="M0 19.5H42M1 20.5H42" /><path d="M22 0V19" /><path d="M15 19V42" /><path d="M29 19V42" /></g><g stroke="#707070" stroke-dasharray="1 1" stroke-width="1" fill="none"></g></svg></div><div class="abs" style="left:-859px;top:-284px"><span class="abs" style="left:867.70px;top:521.49px;font-size:11px;line-height:13px;white-space:pre;color:#000;font-weight:400;transform:scaleX(1.0065);transform-origin:0 50%;">down...</span></div><div class="abs" style="left:56px;top:193px;width:42px;height:42px;"><svg width="42" height="42" viewBox="0 0 42 42" shape-rendering="crispEdges"><rect x="1" y="1" width="40" height="40" fill="url(#lh)"/><rect x=".5" y=".5" width="41" height="41" fill="none" stroke="#747474" stroke-dasharray="1 1"/><g stroke="#6a6a6a" stroke-dasharray="1 1" stroke-width="2" fill="none"><path stroke-width="1" d="M0 25.5H42M1 26.5H42" /><path d="M15 0V25" /><path d="M29 0V25" /></g><g stroke="#707070" stroke-dasharray="1 1" stroke-width="1" fill="none"></g></svg></div><div class="abs" style="left:-859px;top:-284px"><span class="abs" style="left:916.70px;top:521.49px;font-size:11px;line-height:13px;white-space:pre;color:#000;font-weight:400;transform:scaleX(1.0009);transform-origin:0 50%;">down...</span></div><div class="abs" style="left:105px;top:193px;width:42px;height:42px;"><svg width="42" height="42" viewBox="0 0 42 42" shape-rendering="crispEdges"><rect x="1" y="1" width="40" height="40" fill="url(#lh)"/><rect x=".5" y=".5" width="41" height="41" fill="none" stroke="#747474" stroke-dasharray="1 1"/><g stroke="#6a6a6a" stroke-dasharray="1 1" stroke-width="2" fill="none"><path stroke-width="1" d="M0 21.5H42M1 22.5H42" /><path d="M15 0V21" /><path d="M29 0V21" /></g><g stroke="#707070" stroke-dasharray="1 1" stroke-width="1" fill="none"></g></svg></div><div class="abs" style="left:-859px;top:-284px"><span class="abs" style="left:965.50px;top:521.49px;font-size:11px;line-height:13px;white-space:pre;color:#000;font-weight:400;transform:scaleX(1.0009);transform-origin:0 50%;">down...</span></div><div class="abs" style="left:7px;top:255px;width:42px;height:42px;"><svg width="42" height="42" viewBox="0 0 42 42" shape-rendering="crispEdges"><rect x="1" y="1" width="40" height="40" fill="url(#lh)"/><rect x=".5" y=".5" width="41" height="41" fill="none" stroke="#747474" stroke-dasharray="1 1"/><g stroke="#6a6a6a" stroke-dasharray="1 1" stroke-width="2" fill="none"><path stroke-width="1" d="M0 25.5H42M1 26.5H42" /><path d="M15 0V25" /><path d="M29 0V25" /><path d="M22 25V42" /></g><g stroke="#707070" stroke-dasharray="1 1" stroke-width="1" fill="none"></g></svg></div><div class="abs" style="left:-859px;top:-284px"><span class="abs" style="left:867.70px;top:583.49px;font-size:11px;line-height:13px;white-space:pre;color:#000;font-weight:400;transform:scaleX(1.0065);transform-origin:0 50%;">down...</span></div><div class="abs" style="left:56px;top:255px;width:42px;height:42px;"><svg width="42" height="42" viewBox="0 0 42 42" shape-rendering="crispEdges"><rect x="1" y="1" width="40" height="40" fill="url(#lh)"/><rect x=".5" y=".5" width="41" height="41" fill="none" stroke="#747474" stroke-dasharray="1 1"/><g stroke="#6a6a6a" stroke-dasharray="1 1" stroke-width="2" fill="none"><path stroke-width="1" d="M0 21.5H42M1 22.5H42" /><path d="M15 0V21" /><path d="M29 0V21" /><path d="M22 21V42" /></g><g stroke="#707070" stroke-dasharray="1 1" stroke-width="1" fill="none"></g></svg></div><div class="abs" style="left:-859px;top:-284px"><span class="abs" style="left:916.70px;top:583.49px;font-size:11px;line-height:13px;white-space:pre;color:#000;font-weight:400;transform:scaleX(1.0009);transform-origin:0 50%;">down...</span></div><div class="abs" style="left:105px;top:255px;width:42px;height:42px;"><svg width="42" height="42" viewBox="0 0 42 42" shape-rendering="crispEdges"><rect x="1" y="1" width="40" height="40" fill="url(#lh)"/><rect x=".5" y=".5" width="41" height="41" fill="none" stroke="#747474" stroke-dasharray="1 1"/><g stroke="#6a6a6a" stroke-dasharray="1 1" stroke-width="2" fill="none"><path stroke-width="1" d="M0 21.5H42M1 22.5H42" /><path d="M15 0V42" /><path d="M29 0V42" /></g><g stroke="#707070" stroke-dasharray="1 1" stroke-width="1" fill="none"></g></svg></div><div class="abs" style="left:-859px;top:-284px"><span class="abs" style="left:965.50px;top:583.49px;font-size:11px;line-height:13px;white-space:pre;color:#000;font-weight:400;transform:scaleX(1.0009);transform-origin:0 50%;">down...</span></div><div class="abs" style="left:7px;top:317px;width:42px;height:42px;"><svg width="42" height="42" viewBox="0 0 42 42" shape-rendering="crispEdges"><path d="M1 1H27V14H41V41H15V28H1z" fill="url(#lh)"/><rect x=".5" y=".5" width="41" height="41" fill="none" stroke="#dcdcdc"/><g stroke="#6a6a6a" stroke-dasharray="1 1" stroke-width="2" fill="none"></g><g stroke="#707070" stroke-dasharray="1 1" stroke-width="1" fill="none"><path d="M.5 .5H27.5V28.5H.5z M14.5 14.5H41.5V41.5H14.5z" fill="none"/></g></svg></div><div class="abs" style="left:-859px;top:-284px"><span class="abs" style="left:865.90px;top:645.49px;font-size:11px;line-height:13px;white-space:pre;color:#000;font-weight:400;transform:scaleX(0.9917);transform-origin:0 50%;">layer  ...</span></div><div class="abs" style="left:56px;top:317px;width:42px;height:42px;"><svg width="42" height="42" viewBox="0 0 42 42" shape-rendering="crispEdges"><path d="M1 1H27V14H41V41H15V28H1z" fill="url(#lh)"/><rect x=".5" y=".5" width="41" height="41" fill="none" stroke="#dcdcdc"/><g stroke="#6a6a6a" stroke-dasharray="1 1" stroke-width="2" fill="none"></g><g stroke="#707070" stroke-dasharray="1 1" stroke-width="1" fill="none"><path d="M.5 .5H27.5V28.5H.5z M14.5 14.5H41.5V41.5H14.5z M14.5 14.5H28.5V28.5H14.5z" fill="none"/></g></svg></div><div class="abs" style="left:-859px;top:-284px"><span class="abs" style="left:914.70px;top:645.49px;font-size:11px;line-height:13px;white-space:pre;color:#000;font-weight:400;transform:scaleX(0.9994);transform-origin:0 50%;">layer  ...</span></div><div class="abs" style="left:105px;top:317px;width:42px;height:42px;"><svg width="42" height="42" viewBox="0 0 42 42" shape-rendering="crispEdges"><rect x="1" y="1" width="40" height="40" fill="url(#lh)"/><rect x=".5" y=".5" width="41" height="41" fill="none" stroke="#747474" stroke-dasharray="1 1"/><g stroke="#6a6a6a" stroke-dasharray="1 1" stroke-width="2" fill="none"><path stroke-width="1" d="M0 20.5H42M1 21.5H42" /><path d="M21 0V42" /></g><g stroke="#707070" stroke-dasharray="1 1" stroke-width="1" fill="none"><path d="M11.5 11.5H31.5V31.5H11.5z" fill="none"/></g></svg></div><div class="abs" style="left:-859px;top:-284px"><span class="abs" style="left:963.80px;top:645.49px;font-size:11px;line-height:13px;white-space:pre;color:#000;font-weight:400;transform:scaleX(1.0070);transform-origin:0 50%;">layer  ...</span></div><div class="abs" style="left:7px;top:379px;width:42px;height:42px;"><svg width="42" height="42" viewBox="0 0 42 42" shape-rendering="crispEdges"><rect x="1" y="1" width="40" height="40" fill="url(#lh)"/><rect x=".5" y=".5" width="41" height="41" fill="none" stroke="#747474" stroke-dasharray="1 1"/><g stroke="#6a6a6a" stroke-dasharray="1 1" stroke-width="2" fill="none"><path d="M20 0V11" /><path d="M20 30V42" /><path stroke-width="1" d="M0 19.5H11M1 20.5H11" /><path stroke-width="1" d="M30 19.5H42M31 20.5H42" /></g><g stroke="#707070" stroke-dasharray="1 1" stroke-width="1" fill="none"><path d="M11.5 11.5H29.5V29.5H11.5z" fill="none"/></g></svg></div><div class="abs" style="left:-859px;top:-284px"><span class="abs" style="left:865.90px;top:707.49px;font-size:11px;line-height:13px;white-space:pre;color:#000;font-weight:400;transform:scaleX(0.9917);transform-origin:0 50%;">layer  ...</span></div><div class="abs" style="left:56px;top:379px;width:42px;height:42px;"><svg width="42" height="42" viewBox="0 0 42 42" shape-rendering="crispEdges"><rect x="1" y="1" width="40" height="40" fill="url(#lh)"/><rect x=".5" y=".5" width="41" height="41" fill="none" stroke="#747474" stroke-dasharray="1 1"/><g stroke="#6a6a6a" stroke-dasharray="1 1" stroke-width="2" fill="none"></g><g stroke="#707070" stroke-dasharray="1 1" stroke-width="1" fill="none"><path d="M11.5 11.5H31.5V31.5H11.5z" fill="none"/></g></svg></div><div class="abs" style="left:-859px;top:-284px"><span class="abs" style="left:914.70px;top:707.49px;font-size:11px;line-height:13px;white-space:pre;color:#000;font-weight:400;transform:scaleX(0.9994);transform-origin:0 50%;">layer  ...</span></div><div class="abs" style="left:105px;top:379px;width:42px;height:42px;"><svg width="42" height="42" viewBox="0 0 42 42" shape-rendering="crispEdges"><rect x="1" y="1" width="40" height="40" fill="url(#lh)"/><rect x=".5" y=".5" width="41" height="41" fill="none" stroke="#747474" stroke-dasharray="1 1"/><g stroke="#6a6a6a" stroke-dasharray="1 1" stroke-width="2" fill="none"></g><g stroke="#707070" stroke-dasharray="1 1" stroke-width="1" fill="none"><path d="M3.5 3.5H24.5V24.5H3.5z" fill="none"/></g></svg></div><div class="abs" style="left:-859px;top:-284px"><span class="abs" style="left:963.80px;top:707.49px;font-size:11px;line-height:13px;white-space:pre;color:#000;font-weight:400;transform:scaleX(1.0070);transform-origin:0 50%;">layer  ...</span></div></div><div class="abs chk" style="left:1023px;top:284px;width:16px;height:430px;"></div><div class="abs b3" style="left:1023px;top:284px;width:16px;height:16px;"><svg class="abs" style="left:0;top:0" width="16" height="16"><polygon points="3,9 11,9 7,5" fill="#000"/></svg></div><div class="abs b3" style="left:1023px;top:698px;width:16px;height:16px;"><svg class="abs" style="left:0;top:0" width="16" height="16"><polygon points="3,5 11,5 7,9" fill="#000"/></svg></div><div class="abs b3" style="left:1023px;top:300px;width:16px;height:73px;"></div>
<div class="abs" style="left:8px;top:719px;width:14px;height:14px"><svg width="14" height="14" viewBox="0 0 14 14"><path d="M7 .9 L9.1 4.6 L13.3 5.3 L10.4 8.5 L11 12.9 L7 11.1 L3 12.9 L3.6 8.5 L.7 5.3 L4.9 4.6Z" fill="#f7d11c" stroke="#6e5206" stroke-width="1.1" stroke-linejoin="round"/><path d="M7 2.6 L8.2 5.6 L7 9.5 L4.6 6.2z" fill="#fff7a0" opacity=".75"/><circle cx="5.6" cy="5.6" r="1" fill="#fff"/></svg></div><svg class="abs" style="left:30px;top:719px" width="15" height="14" viewBox="0 0 15 14"><path d="M1.2 5.8 Q2 2 6 2.2 L6 .6 L9.6 3.4 L6 6 L6 4.4 Q3.6 4.2 3 6.4z" fill="#e8c020" stroke="#6a5208" stroke-width=".9" stroke-linejoin="round"/><path d="M13.8 8.2 Q13 12 9 11.8 L9 13.4 L5.4 10.6 L9 8 L9 9.6 Q11.4 9.8 12 7.6z" fill="#e8c020" stroke="#6a5208" stroke-width=".9" stroke-linejoin="round"/></svg><svg class="abs" style="left:51px;top:719px" width="17" height="14" viewBox="0 0 17 14"><path d="M.7 11.5V2Q.7 1 1.7 1H5.5L6.8 2.6H12Q13 2.6 13 3.6V5" fill="#fdf4d8" stroke="#5a4a2a" stroke-width="1"/><path d="M1 11.8L3 5H16L13.6 11.8z" fill="#f4d060" stroke="#5a4a2a" stroke-width="1" stroke-linejoin="round"/><circle cx="7.2" cy="6.6" r="3.4" fill="#cfe8fb" stroke="#7a7a7a" stroke-width="1"/><path d="M9.8 9.4L13 12.8" stroke="#d89030" stroke-width="1.6"/></svg><div class="abs " style="left:257px;top:718px;width:7px;height:15px;border:1px solid #9a9a9a;background:linear-gradient(90deg,#fff 0,#f4f4f4 40%,#c4c4c4 100%)"><div class="abs" style="left:1px;top:9px;width:4px;height:4px;background:#b8b8b8;opacity:.7"></div></div><div class="abs " style="left:246px;top:723px;width:2px;height:4px;background:#d9d9e2"></div><div class="abs " style="left:311px;top:723px;width:2px;height:4px;background:#d9d9e2"></div><span class="abs" style="left:480.50px;top:719.52px;font-size:12.5px;line-height:14.5px;white-space:pre;color:#000;font-weight:400;transform:scaleX(0.9638);transform-origin:0 50%;">Preview Zoom</span><div class="abs " style="left:584px;top:723px;width:2px;height:4px;background:#d9d9e2"></div><div class="abs " style="left:642px;top:718px;width:7px;height:15px;border:1px solid #9a9a9a;background:linear-gradient(90deg,#fff 0,#f4f4f4 40%,#c4c4c4 100%)"><div class="abs" style="left:1px;top:9px;width:4px;height:4px;background:#b8b8b8;opacity:.7"></div></div><div class="abs " style="left:660px;top:716px;width:40px;height:20px;background:#ededed;border:1px solid;border-color:#8c8c8c #fff #fff #8c8c8c"></div><span class="abs" style="left:663.20px;top:720.37px;font-size:11.5px;line-height:13.5px;white-space:pre;color:#000;font-weight:400;transform:scaleX(1.0978);transform-origin:0 50%;">100 %</span><div class="abs " style="left:707px;top:718px;width:16px;height:16px;background-image:conic-gradient(#fff 25%,#cbcbcb 0 50%,#fff 0 75%,#cbcbcb 0);background-size:8px 8px"></div><svg class="abs" style="left:729px;top:718px" width="16" height="16" viewBox="0 0 16 16"><rect x="3.5" y="3.5" width="9" height="9" fill="#eaeaea" stroke="#463a32" stroke-width="1"/><g transform="translate(8 8) scale(1 1) translate(-8 -8)"><path d="M2 2L5.6 5.6" stroke="#463a32" stroke-width="3" stroke-linecap="round"/><path d="M0.8 4.8V0.8H4.8" fill="none" stroke="#463a32" stroke-width="1.5"/><path d="M2.2 2.2L5.6 5.6" stroke="#fff" stroke-width="1.3" stroke-linecap="round"/></g><g transform="translate(8 8) scale(-1 1) translate(-8 -8)"><path d="M2 2L5.6 5.6" stroke="#463a32" stroke-width="3" stroke-linecap="round"/><path d="M0.8 4.8V0.8H4.8" fill="none" stroke="#463a32" stroke-width="1.5"/><path d="M2.2 2.2L5.6 5.6" stroke="#fff" stroke-width="1.3" stroke-linecap="round"/></g><g transform="translate(8 8) scale(1 -1) translate(-8 -8)"><path d="M2 2L5.6 5.6" stroke="#463a32" stroke-width="3" stroke-linecap="round"/><path d="M0.8 4.8V0.8H4.8" fill="none" stroke="#463a32" stroke-width="1.5"/><path d="M2.2 2.2L5.6 5.6" stroke="#fff" stroke-width="1.3" stroke-linecap="round"/></g><g transform="translate(8 8) scale(-1 -1) translate(-8 -8)"><path d="M2 2L5.6 5.6" stroke="#463a32" stroke-width="3" stroke-linecap="round"/><path d="M0.8 4.8V0.8H4.8" fill="none" stroke="#463a32" stroke-width="1.5"/><path d="M2.2 2.2L5.6 5.6" stroke="#fff" stroke-width="1.3" stroke-linecap="round"/></g></svg>
</div></body></html>
